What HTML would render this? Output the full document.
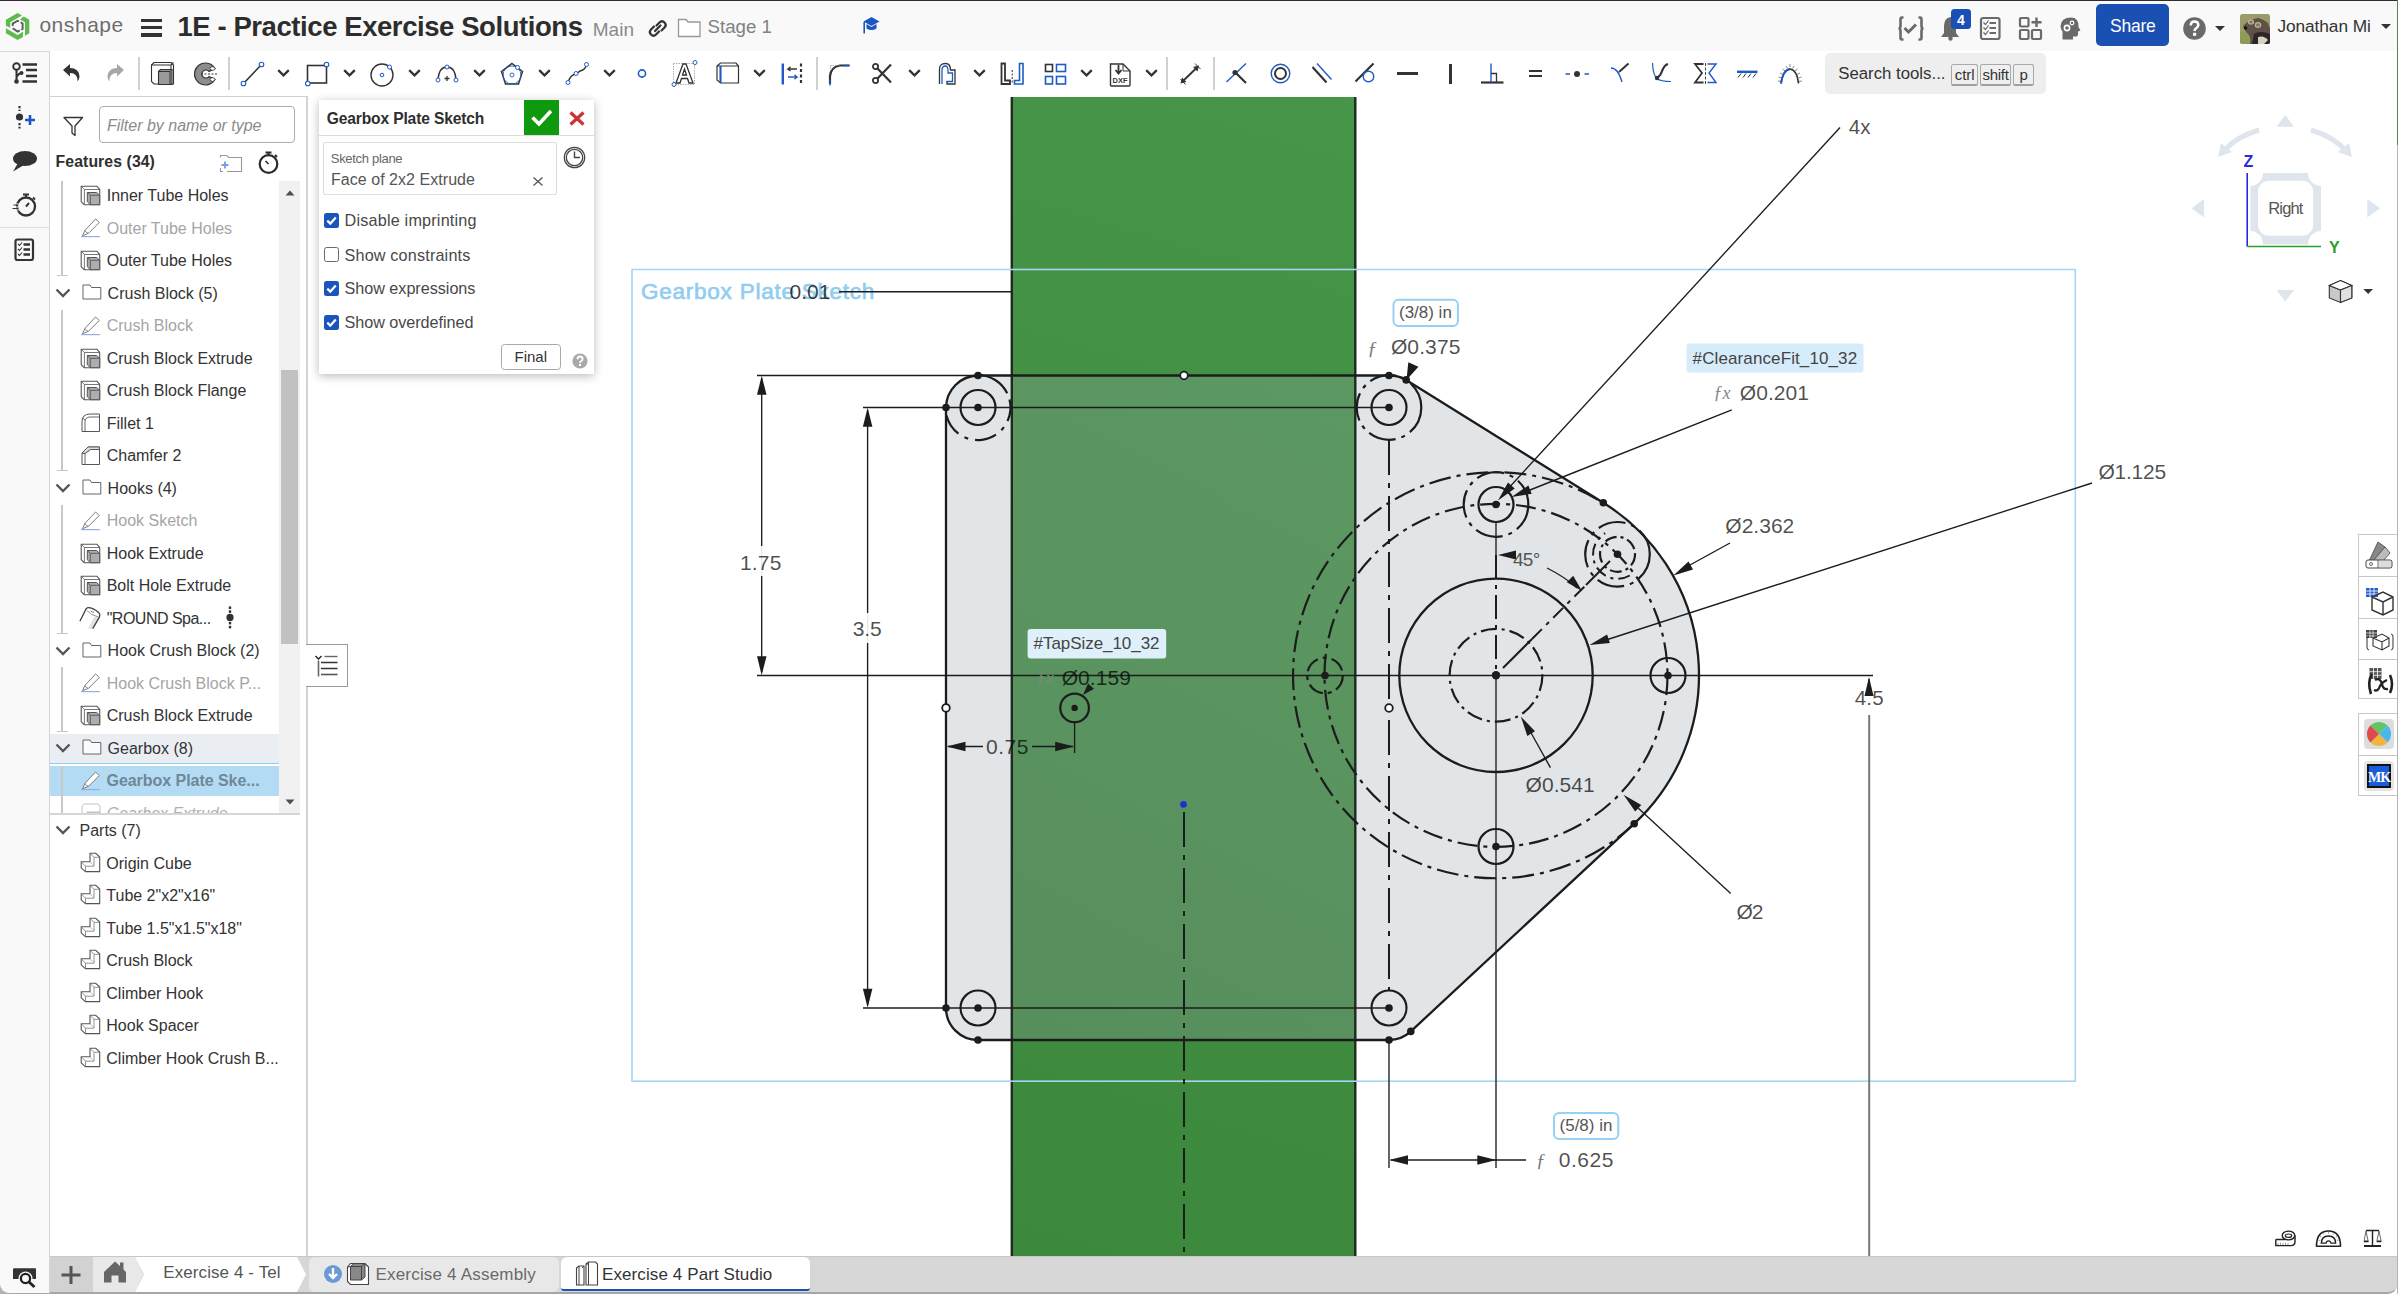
<!DOCTYPE html>
<html><head><meta charset="utf-8">
<style>
*{box-sizing:border-box;margin:0;padding:0}
html,body{width:2398px;height:1294px;overflow:hidden;background:#fff;font-family:"Liberation Sans",sans-serif;color:#333}
.a{position:absolute}
.t{position:absolute;white-space:nowrap;line-height:1}
svg{position:absolute;overflow:visible}
</style></head><body>
<svg style="left:0;top:0" width="2398" height="1294" viewBox="0 0 2398 1294">
<defs><clipPath id="vp"><rect x="308" y="97" width="2089" height="1159"/></clipPath><clipPath id="gr"><rect x="1011" y="97" width="345" height="1158"/></clipPath><linearGradient id="gg" gradientUnits="userSpaceOnUse" x1="1011" y1="1255" x2="1356" y2="97"><stop offset="0" stop-color="#3c883d"/><stop offset="1" stop-color="#479548"/></linearGradient><linearGradient id="gl" gradientUnits="userSpaceOnUse" x1="1011" y1="1040" x2="1356" y2="375"><stop offset="0" stop-color="#578f5c"/><stop offset="1" stop-color="#5c9862"/></linearGradient></defs>
<g clip-path="url(#vp)">
<text stroke="#92cdf0" stroke-width="0.7" x="641.0" y="299.4" font-family="Liberation Sans" font-size="22.5" font-weight="normal" font-style="normal" letter-spacing="0.76" fill="#92cdf0" fill-opacity="1">Gearbox Plate Sketch</text>
<rect x="1011" y="97" width="345" height="1159" fill="url(#gg)"/>
<path d="M978 375.5 L1389 375.5 A32.5 32.5 0 0 1 1406.2 379.9 L1603.3 502.7 A203 203 0 0 1 1634.2 823.7 L1410.8 1031.4 A32 32 0 0 1 1389 1040 L978 1040 A32 32 0 0 1 946 1008 L946 407.5 A32.5 32.5 0 0 1 978 375.5 Z" fill="#e1e5e8"/>
<path d="M978 375.5 L1389 375.5 A32.5 32.5 0 0 1 1406.2 379.9 L1603.3 502.7 A203 203 0 0 1 1634.2 823.7 L1410.8 1031.4 A32 32 0 0 1 1389 1040 L978 1040 A32 32 0 0 1 946 1008 L946 407.5 A32.5 32.5 0 0 1 978 375.5 Z" fill="url(#gl)" clip-path="url(#gr)"/>
<path d="M1011.8 97.0 L1011.8 1256.0" stroke="#1e2a1e" stroke-width="2.4" fill="none"/>
<path d="M1355.3 97.0 L1355.3 1256.0" stroke="#1e2a1e" stroke-width="2.4" fill="none"/>
<rect x="632" y="269.5" width="1443.3" height="811.7" fill="none" stroke="#a6d6f4" stroke-width="1.6"/>
<path d="M757.0 375.5 L980.0 375.5" stroke="#1c1c1c" stroke-width="1.35" fill="none"/>
<path d="M863.0 407.5 L1389.0 407.5" stroke="#1c1c1c" stroke-width="1.35" fill="none"/>
<path d="M757.0 675.5 L1873.0 675.5" stroke="#1c1c1c" stroke-width="1.35" fill="none"/>
<path d="M863.0 1008.0 L1389.0 1008.0" stroke="#1c1c1c" stroke-width="1.35" fill="none"/>
<path d="M839.0 291.7 L1012.0 291.7" stroke="#1c1c1c" stroke-width="1.35" fill="none"/>
<path d="M761.7 378.0 L761.7 672.0" stroke="#1c1c1c" stroke-width="1.35" fill="none"/>
<path d="M761.7 375.8 L766.5 394.8 L757.0 394.8 Z" fill="#1c1c1c"/>
<path d="M761.7 675.2 L757.0 656.2 L766.5 656.2 Z" fill="#1c1c1c"/>
<rect x="736" y="546" width="50" height="30" fill="#fff" opacity="0.9"/>
<text x="740.0" y="569.5" font-family="Liberation Sans" font-size="21" font-weight="normal" font-style="normal" letter-spacing="0.18" fill="#000" fill-opacity="0.7">1.75</text>
<path d="M867.6 410.0 L867.6 1005.0" stroke="#1c1c1c" stroke-width="1.35" fill="none"/>
<path d="M867.6 407.8 L872.4 426.8 L862.9 426.8 Z" fill="#1c1c1c"/>
<path d="M867.6 1007.7 L862.9 988.7 L872.4 988.7 Z" fill="#1c1c1c"/>
<rect x="848" y="613" width="38" height="30" fill="#fff" opacity="0.9"/>
<text x="852.7" y="635.6" font-family="Liberation Sans" font-size="21" font-weight="normal" font-style="normal" letter-spacing="-0.06" fill="#000" fill-opacity="0.7">3.5</text>
<path d="M948.0 746.5 L983.0 746.5" stroke="#1c1c1c" stroke-width="1.35" fill="none"/>
<path d="M1032.0 746.5 L1073.0 746.5" stroke="#1c1c1c" stroke-width="1.35" fill="none"/>
<path d="M946.5 746.5 L965.5 741.8 L965.5 751.2 Z" fill="#1c1c1c"/>
<path d="M1074.2 746.5 L1055.2 751.2 L1055.2 741.8 Z" fill="#1c1c1c"/>
<path d="M1074.6 722.0 L1074.6 753.0" stroke="#1c1c1c" stroke-width="1.35" fill="none"/>
<text x="986.0" y="754.0" font-family="Liberation Sans" font-size="21" font-weight="normal" font-style="normal" letter-spacing="0.48" fill="#000" fill-opacity="0.7">0.75</text>
<text x="789.5" y="299.4" font-family="Liberation Sans" font-size="21" font-weight="normal" font-style="normal" letter-spacing="0.03" fill="#000" fill-opacity="0.75">0.01</text>
<path d="M978 375.5 L1389 375.5 A32.5 32.5 0 0 1 1406.2 379.9 L1603.3 502.7 A203 203 0 0 1 1634.2 823.7 L1410.8 1031.4 A32 32 0 0 1 1389 1040 L978 1040 A32 32 0 0 1 946 1008 L946 407.5 A32.5 32.5 0 0 1 978 375.5 Z" fill="none" stroke="#1c1c1c" stroke-width="2.3"/>
<path d="M1634.4 823.8 A203 203 0 1 1 1603.6 503.1" stroke="#1c1c1c" stroke-width="2.2" stroke-dasharray="22 6 4 6" fill="none"/>
<circle cx="1496.0" cy="675.3" r="171.5" stroke="#1c1c1c" stroke-width="2.2" stroke-dasharray="20 6 4 6" stroke-dashoffset="0" fill="none"/>
<circle cx="1496.0" cy="675.3" r="96.7" stroke="#1c1c1c" stroke-width="2.3" fill="none"/>
<circle cx="1496.0" cy="675.3" r="46.4" stroke="#1c1c1c" stroke-width="2.2" stroke-dasharray="16 5 3 5" stroke-dashoffset="0" fill="none"/>
<path d="M1389.0 440.0 L1389.0 990.0" stroke="#1c1c1c" stroke-width="2.0" stroke-dasharray="35 8 5 8" fill="none"/>
<path d="M1184.0 812.0 L1184.0 1256.0" stroke="#1c1c1c" stroke-width="2.0" stroke-dasharray="35 8 5 8" fill="none"/>
<path d="M1496.0 522.0 L1496.0 555.0" stroke="#1c1c1c" stroke-width="1.35" fill="none"/>
<path d="M1496.0 555.0 L1496.0 675.0" stroke="#1c1c1c" stroke-width="2.0" stroke-dasharray="24 6 4 6" fill="none"/>
<path d="M1496.0 675.0 L1496.0 1168.0" stroke="#1c1c1c" stroke-width="1.35" fill="none"/>
<path d="M1389.0 1040.0 L1389.0 1168.0" stroke="#1c1c1c" stroke-width="1.35" fill="none"/>
<path d="M1503.0 668.0 L1532.0 639.0" stroke="#1c1c1c" stroke-width="2.0" fill="none"/>
<path d="M1532.0 639.0 L1586.0 585.0" stroke="#1c1c1c" stroke-width="2.0" stroke-dasharray="14 6 4 6" fill="none"/>
<path d="M1586.0 585.0 L1610.0 561.0" stroke="#1c1c1c" stroke-width="2.0" fill="none"/>
<circle cx="978.0" cy="407.5" r="17.5" stroke="#1c1c1c" stroke-width="2.2" fill="none"/>
<circle cx="978.0" cy="407.5" r="3.8" fill="#1c1c1c"/>
<circle cx="1389.0" cy="407.5" r="17.5" stroke="#1c1c1c" stroke-width="2.2" fill="none"/>
<circle cx="1389.0" cy="407.5" r="3.8" fill="#1c1c1c"/>
<circle cx="978.0" cy="1008.0" r="17.5" stroke="#1c1c1c" stroke-width="2.2" fill="none"/>
<circle cx="978.0" cy="1008.0" r="3.8" fill="#1c1c1c"/>
<circle cx="1389.0" cy="1008.0" r="17.5" stroke="#1c1c1c" stroke-width="2.2" fill="none"/>
<circle cx="1389.0" cy="1008.0" r="3.8" fill="#1c1c1c"/>
<circle cx="1496.0" cy="504.5" r="17.5" stroke="#1c1c1c" stroke-width="2.2" fill="none"/>
<circle cx="1496.0" cy="504.5" r="3.8" fill="#1c1c1c"/>
<circle cx="1668.0" cy="675.5" r="17.5" stroke="#1c1c1c" stroke-width="2.2" fill="none"/>
<circle cx="1668.0" cy="675.5" r="3.8" fill="#1c1c1c"/>
<circle cx="1496.0" cy="846.5" r="17.5" stroke="#1c1c1c" stroke-width="2.2" fill="none"/>
<circle cx="1496.0" cy="846.5" r="3.8" fill="#1c1c1c"/>
<circle cx="1325.0" cy="675.5" r="17.8" stroke="#1c1c1c" stroke-width="2.2" stroke-dasharray="16 5 4 5" stroke-dashoffset="0" fill="none"/>
<circle cx="1325.0" cy="675.5" r="3.8" fill="#1c1c1c"/>
<circle cx="1617.5" cy="554.3" r="17.5" stroke="#1c1c1c" stroke-width="2.2" stroke-dasharray="12 4 3 4" stroke-dashoffset="0" fill="none"/>
<circle cx="1617.5" cy="554.3" r="3.8" fill="#1c1c1c"/>
<circle cx="1389.0" cy="407.5" r="32.3" stroke="#1c1c1c" stroke-width="2.2" stroke-dasharray="28 6 4 6" stroke-dashoffset="0" fill="none"/>
<circle cx="1496.0" cy="504.5" r="32.3" stroke="#1c1c1c" stroke-width="2.2" stroke-dasharray="28 6 4 6" stroke-dashoffset="0" fill="none"/>
<circle cx="1617.5" cy="554.3" r="32.3" stroke="#1c1c1c" stroke-width="2.2" stroke-dasharray="28 6 4 6" stroke-dashoffset="0" fill="none"/>
<path d="M978.0 375.0 A32.5 32.5 0 0 1 1007.2 393.3" stroke="#1c1c1c" stroke-width="2.2" fill="none"/>
<path d="M1009.5 399.6 A32.5 32.5 0 1 1 945.5 407.5" stroke="#1c1c1c" stroke-width="2.2" stroke-dasharray="22 7 4 7" fill="none"/>
<path d="M1629.8 575.5 A24.5 24.5 0 0 1 1605.2 533.1" stroke="#1c1c1c" stroke-width="2.0" stroke-dasharray="12 5 3 5" fill="none"/>
<circle cx="1496.0" cy="675.3" r="4.2" fill="#1c1c1c"/>
<circle cx="1074.6" cy="707.9" r="14.3" stroke="#1c1c1c" stroke-width="2.2" fill="none"/>
<circle cx="1074.6" cy="707.9" r="3.2" fill="#1c1c1c"/>
<circle cx="978.0" cy="375.5" r="3.8" fill="#1c1c1c"/>
<circle cx="946.0" cy="407.5" r="3.8" fill="#1c1c1c"/>
<circle cx="1389.0" cy="375.5" r="3.8" fill="#1c1c1c"/>
<circle cx="1406.2" cy="379.9" r="3.8" fill="#1c1c1c"/>
<circle cx="1603.3" cy="502.7" r="3.8" fill="#1c1c1c"/>
<circle cx="1634.2" cy="823.7" r="3.8" fill="#1c1c1c"/>
<circle cx="1410.8" cy="1031.4" r="3.8" fill="#1c1c1c"/>
<circle cx="1389.0" cy="1040.0" r="3.8" fill="#1c1c1c"/>
<circle cx="978.0" cy="1040.0" r="3.8" fill="#1c1c1c"/>
<circle cx="946.0" cy="1008.0" r="3.8" fill="#1c1c1c"/>
<circle cx="1184.0" cy="375.5" r="3.8" fill="#fff" stroke="#1c1c1c" stroke-width="1.8"/>
<circle cx="946.0" cy="707.9" r="3.8" fill="#fff" stroke="#1c1c1c" stroke-width="1.8"/>
<circle cx="1389.0" cy="708.0" r="3.8" fill="#fff" stroke="#1c1c1c" stroke-width="1.8"/>
<circle cx="1183.5" cy="804.4" r="3.3" fill="#1a30d0"/>
<path d="M1840.0 127.5 L1505.0 492.0" stroke="#1c1c1c" stroke-width="1.35" fill="none"/>
<path d="M1498.0 500.5 L1508.0 482.6 L1514.7 488.6 Z" fill="#1c1c1c"/>
<path d="M1731.8 409.9 L1530.0 490.0" stroke="#1c1c1c" stroke-width="1.35" fill="none"/>
<path d="M1511.5 497.0 L1528.4 485.4 L1531.7 493.8 Z" fill="#1c1c1c"/>
<path d="M1730.0 543.0 L1690.0 565.0" stroke="#1c1c1c" stroke-width="1.35" fill="none"/>
<path d="M1673.4 575.5 L1688.5 561.6 L1693.0 569.4 Z" fill="#1c1c1c"/>
<path d="M2092.0 483.0 L1606.0 640.0" stroke="#1c1c1c" stroke-width="1.35" fill="none"/>
<path d="M1589.5 645.0 L1607.1 634.5 L1609.9 643.1 Z" fill="#1c1c1c"/>
<path d="M1550.4 767.6 L1530.0 731.0" stroke="#1c1c1c" stroke-width="1.35" fill="none"/>
<path d="M1520.8 716.5 L1535.0 731.3 L1527.3 735.9 Z" fill="#1c1c1c"/>
<path d="M1730.7 893.4 L1637.0 807.0" stroke="#1c1c1c" stroke-width="1.35" fill="none"/>
<path d="M1623.5 794.8 L1641.3 805.0 L1635.2 811.6 Z" fill="#1c1c1c"/>
<path d="M1406.5 380.0 L1408.3 362.2 L1418.4 366.7 Z" fill="#1c1c1c"/>
<path d="M1083.0 695.0 L1088.1 683.4 L1094.0 688.8 Z" fill="#1c1c1c"/>
<path d="M1498.0 555.0 L1516.0 550.5 L1516.0 559.5 Z" fill="#1c1c1c"/>
<path d="M1547 568 Q1565 577 1577 588" fill="none" stroke="#1c1c1c" stroke-width="1.3"/>
<path d="M1582.0 591.0 L1566.8 582.2 L1573.2 575.8 Z" fill="#1c1c1c"/>
<path d="M1869.0 679.0 L1869.0 696.0" stroke="#1c1c1c" stroke-width="1.35" fill="none"/>
<path d="M1869.0 677.0 L1873.5 696.0 L1864.5 696.0 Z" fill="#1c1c1c"/>
<path d="M1869.2 715.0 L1869.2 1256.0" stroke="#777" stroke-width="2" fill="none"/>
<path d="M1391.0 1160.0 L1526.0 1160.0" stroke="#1c1c1c" stroke-width="1.35" fill="none"/>
<path d="M1389.0 1160.0 L1408.0 1155.2 L1408.0 1164.8 Z" fill="#1c1c1c"/>
<path d="M1496.3 1160.0 L1477.3 1164.8 L1477.3 1155.2 Z" fill="#1c1c1c"/>
<text x="1390.9" y="354.3" font-family="Liberation Sans" font-size="21" font-weight="normal" font-style="normal" letter-spacing="0.12" fill="#000" fill-opacity="0.7">Ø0.375</text>
<text x="1367.4" y="355.0" font-family="Liberation Serif" font-size="19" font-weight="normal" font-style="italic" letter-spacing="0.00" fill="#777" fill-opacity="1">ƒ</text>
<text x="1739.8" y="400.0" font-family="Liberation Sans" font-size="21" font-weight="normal" font-style="normal" letter-spacing="0.04" fill="#000" fill-opacity="0.7">Ø0.201</text>
<text x="1713.5" y="399.0" font-family="Liberation Serif" font-size="18" font-weight="normal" font-style="italic" letter-spacing="0.00" fill="#888" fill-opacity="1">ƒx</text>
<text x="1848.8" y="134.3" font-family="Liberation Sans" font-size="20.5" font-weight="normal" font-style="normal" letter-spacing="0.07" fill="#000" fill-opacity="0.7">4x</text>
<text x="2098.4" y="479.4" font-family="Liberation Sans" font-size="21" font-weight="normal" font-style="normal" letter-spacing="-0.21" fill="#000" fill-opacity="0.7">Ø1.125</text>
<text x="1725.3" y="533.2" font-family="Liberation Sans" font-size="21" font-weight="normal" font-style="normal" letter-spacing="0.02" fill="#000" fill-opacity="0.7">Ø2.362</text>
<text x="1525.6" y="792.0" font-family="Liberation Sans" font-size="21" font-weight="normal" font-style="normal" letter-spacing="0.02" fill="#000" fill-opacity="0.7">Ø0.541</text>
<text x="1736.5" y="918.9" font-family="Liberation Sans" font-size="21" font-weight="normal" font-style="normal" letter-spacing="-1.11" fill="#000" fill-opacity="0.7">Ø2</text>
<text x="1854.8" y="704.6" font-family="Liberation Sans" font-size="20.5" font-weight="normal" font-style="normal" letter-spacing="0.13" fill="#000" fill-opacity="0.7">4.5</text>
<text x="1558.8" y="1167.0" font-family="Liberation Sans" font-size="21" font-weight="normal" font-style="normal" letter-spacing="0.49" fill="#000" fill-opacity="0.7">0.625</text>
<text x="1536.0" y="1167.0" font-family="Liberation Serif" font-size="19" font-weight="normal" font-style="italic" letter-spacing="0.00" fill="#777" fill-opacity="1">ƒ</text>
<text x="1513.0" y="566.0" font-family="Liberation Sans" font-size="19" font-weight="normal" font-style="normal" letter-spacing="-0.74" fill="#555" fill-opacity="1">45°</text>
<text x="1061.7" y="685.4" font-family="Liberation Sans" font-size="21" font-weight="normal" font-style="normal" letter-spacing="0.05" fill="#000" fill-opacity="0.72">Ø0.159</text>
<text x="1036.8" y="684.0" font-family="Liberation Serif" font-size="18" font-weight="normal" font-style="italic" letter-spacing="0.00" fill="#7a8a7a" fill-opacity="1">ƒx</text>
<rect x="1393.5" y="299.7" width="64.4" height="26.4" rx="5" fill="#fff" stroke="#97d0f2" stroke-width="2"/>
<text x="1399.0" y="318.1" font-family="Liberation Sans" font-size="17" font-weight="normal" font-style="normal" letter-spacing="-0.01" fill="#555" fill-opacity="1">(3/8) in</text>
<rect x="1554" y="1113" width="64.3" height="26" rx="5" fill="#fff" stroke="#97d0f2" stroke-width="2"/>
<text x="1559.5" y="1131.3" font-family="Liberation Sans" font-size="17" font-weight="normal" font-style="normal" letter-spacing="0.01" fill="#555" fill-opacity="1">(5/8) in</text>
<rect x="1686.5" y="343.5" width="177" height="29.1" rx="3" fill="#d7ecfa"/>
<text x="1692.6" y="364.2" font-family="Liberation Sans" font-size="17" font-weight="normal" font-style="normal" letter-spacing="0.11" fill="#444" fill-opacity="1">#ClearanceFit_10_32</text>
<rect x="1027.6" y="629.1" width="138.6" height="29.4" rx="3" fill="#dff0fb"/>
<text x="1033.6" y="649.2" font-family="Liberation Sans" font-size="17" font-weight="normal" font-style="normal" letter-spacing="-0.06" fill="#444" fill-opacity="1">#TapSize_10_32</text>
</g></svg>
<svg style="left:2180px;top:105px" width="210" height="205" viewBox="2180 105 210 205">
<path d="M2276.5 126.7 L2285.2 115 L2294 126.7 Z" fill="#dfe5ec"/>
<path d="M2276.5 290 L2285.2 301.5 L2294 290 Z" fill="#dfe5ec"/>
<path d="M2204 199 L2191.5 208.2 L2204 217.5 Z" fill="#dfe5ec"/>
<path d="M2367.3 199 L2380 208.2 L2367.3 217.5 Z" fill="#dfe5ec"/>
<path d="M2259 130 Q2236 137 2225 150" fill="none" stroke="#dfe5ec" stroke-width="5"/><path d="M2218 157 L2221 143 L2232 152 Z" fill="#dfe5ec"/>
<path d="M2311 130 Q2334 137 2345 150" fill="none" stroke="#dfe5ec" stroke-width="5"/><path d="M2352 157 L2349 143 L2338 152 Z" fill="#dfe5ec"/>
<path d="M2263 173 H2308 A13 13 0 0 0 2321 186 V231 A13 13 0 0 0 2308 244.5 H2263 A13 13 0 0 0 2250.4 231 V186 A13 13 0 0 0 2263 173 Z" fill="#dfe5ec"/>
<rect x="2258" y="180.8" width="55.2" height="55" rx="11" fill="#fff"/>
<text x="2268.2" y="213.6" font-family="Liberation Sans" font-size="16.5" font-weight="normal" font-style="normal" letter-spacing="-0.82" fill="#555" fill-opacity="1">Right</text>
<path d="M2247.2 173 V246.5" stroke="#2a2ae0" stroke-width="1.6"/>
<path d="M2247.2 246.5 H2321" stroke="#2aa02a" stroke-width="1.6"/>
<text x="2243.5" y="167.3" font-family="Liberation Sans" font-size="16" font-weight="bold" font-style="normal" letter-spacing="-2.27" fill="#2a2ae0" fill-opacity="1">Z</text>
<text x="2329.0" y="253.2" font-family="Liberation Sans" font-size="16" font-weight="bold" font-style="normal" letter-spacing="-2.17" fill="#2aa02a" fill-opacity="1">Y</text>
<path d="M2340.5 280.5 L2351.8 285.5 V298 L2340.5 302.5 L2329.3 298 V285.5 Z" fill="#c9c9c9" stroke="#333" stroke-width="1.1"/><path d="M2329.3 285.5 L2340.5 290 L2351.8 285.5 M2340.5 290 V302.5" fill="none" stroke="#333" stroke-width="1.1"/><path d="M2329.3 285.5 L2340.5 280.5 L2351.8 285.5 L2340.5 290 Z" fill="#fff" stroke="#333" stroke-width="1.1"/><path d="M2340.5 290 L2351.8 285.5 V298 L2340.5 302.5 Z" fill="#e0e0e0" stroke="#333" stroke-width="1.1"/>
<path d="M2363.4 289 H2373 L2368.2 294 Z" fill="#333"/>
</svg>
<div class="a" style="left:2358px;top:534px;width:40px;height:165px;border:1px solid #c8c8c8;border-right:none;background:#fff"></div>
<div class="a" style="left:2358px;top:575.6px;width:40px;height:1px;background:#c8c8c8"></div>
<div class="a" style="left:2358px;top:617.8px;width:40px;height:1px;background:#c8c8c8"></div>
<div class="a" style="left:2358px;top:658.5px;width:40px;height:1px;background:#c8c8c8"></div>
<div class="a" style="left:2358px;top:713px;width:40px;height:83.4px;border:1px solid #c8c8c8;border-right:none;background:#fff"></div>
<div class="a" style="left:2358px;top:754.5px;width:40px;height:1px;background:#c8c8c8"></div>
<svg style="left:2358px;top:534px" width="40" height="265" viewBox="0 0 40 265"><path d="M11 27 L20 8 L27 13 L21 27 Z" fill="#888" stroke="#444" stroke-width="0.8"/><path d="M15 27 L27 13 L32 19 L25 27 Z" fill="#bbb" stroke="#444" stroke-width="0.8"/><rect x="8" y="26" width="26" height="8" rx="2" fill="#fff" stroke="#444" stroke-width="1"/><circle cx="13" cy="30" r="1.5" fill="none" stroke="#444" stroke-width="0.8"/><path d="M20 26 V34" stroke="#444" stroke-width="0.8"/><rect x="21" y="27" width="12" height="6" fill="#ddd"/><rect x="8" y="54" width="12" height="9" fill="#2a5ecf"/><path d="M8 57 H20 M8 60 H20 M12 54 V63 M16 54 V63" stroke="#fff" stroke-width="0.8"/><path d="M14 63 L25 58 L35 63 V76 L25 81 L14 76 Z M14 63 L25 68 L35 63 M25 68 V81" fill="none" stroke="#333" stroke-width="1.4"/><rect x="8" y="96" width="11" height="8" fill="#444"/><path d="M8 99 H19 M8 102 H19 M12 96 V104 M15 96 V104" stroke="#fff" stroke-width="0.7"/><path d="M15 104 L24 100 L31 104 V112 L24 116 L15 112 Z M15 104 L24 108 L31 104 M24 108 V116" fill="none" stroke="#333" stroke-width="1.1"/><path d="M11 102 Q9 102 9 105 V113 Q9 116 11 116 M33 100 Q35 100 35 103 V113 Q35 116 33 116" fill="none" stroke="#333" stroke-width="1"/><rect x="11.5" y="134" width="12" height="11" fill="#555"/><path d="M11.5 137.7 H23.5 M11.5 141.3 H23.5 M15.5 134 V145 M19.5 134 V145" stroke="#fff" stroke-width="0.8"/><path d="M14 140 Q9 148 13 160" fill="none" stroke="#222" stroke-width="2.6"/><path d="M32 141 Q36 150 32 159" fill="none" stroke="#222" stroke-width="2.6"/><path d="M17 146 Q22 143 24 150 Q25 156 30 155 M29 146 Q24 148 22 152 Q20 158 16 156" fill="none" stroke="#222" stroke-width="2.3"/><rect x="6" y="185" width="30" height="30" rx="4" fill="#ddd"/><path d="M21 200 L12.5 191.5 A12 12 0 0 1 29.5 191.5 Z" fill="#62c462"/><path d="M21 200 L29.5 191.5 A12 12 0 0 1 29.5 208.5 Z" fill="#4cb8ea"/><path d="M21 200 L29.5 208.5 A12 12 0 0 1 12.5 208.5 Z" fill="#f0b440"/><path d="M21 200 L12.5 208.5 A12 12 0 0 1 12.5 191.5 Z" fill="#df4a4a"/><rect x="6" y="227" width="30" height="30" rx="4" fill="#e4e4e4"/><rect x="9" y="230" width="24" height="24" fill="#111"/><rect x="11" y="232" width="20" height="20" fill="#1a5bd8"/><text x="21" y="248" font-family="Liberation Serif" font-weight="bold" font-size="14" fill="#fff" text-anchor="middle" letter-spacing="-1">MK</text></svg>
<svg style="left:2270px;top:1225px" width="120" height="26" viewBox="2270 1225 120 26"><path d="M2275.8 1239.5 H2285 M2275.8 1239.5 V1245.6 H2291 Q2295 1245.6 2295 1241.5 V1235.5" fill="none" stroke="#222" stroke-width="1.4"/><ellipse cx="2288.5" cy="1235.5" rx="6.3" ry="4.4" fill="#fff" stroke="#222" stroke-width="1.4"/><ellipse cx="2288.5" cy="1235.7" rx="3.2" ry="1.7" fill="none" stroke="#222" stroke-width="1.2"/><path d="M2278 1245 V1243 M2280.5 1245 V1242.5 M2283 1245 V1243 M2285.5 1245 V1242.5 M2288 1245 V1243" stroke="#777" stroke-width="0.7"/><path d="M2316.5 1246.3 Q2316.5 1231 2328.5 1231 Q2340.5 1231 2340.5 1246.3 Z" fill="none" stroke="#222" stroke-width="1.6" stroke-linejoin="round"/><path d="M2321.3 1243.2 Q2321.5 1236 2328.5 1236 Q2335.5 1236 2335.7 1243.2 H2331 Q2330.5 1240.8 2328.5 1240.8 Q2326.5 1240.8 2326 1243.2 Z" fill="none" stroke="#222" stroke-width="1.3"/><path d="M2318.5 1240 L2320 1240.5 M2320 1236 L2321.3 1237 M2323 1233.3 L2324 1234.5 M2328.5 1232.2 V1233.6 M2334 1233.3 L2333 1234.5 M2337 1236 L2335.7 1237 M2338.5 1240 L2337 1240.5" stroke="#666" stroke-width="0.7"/><path d="M2366 1230.5 H2379 M2372.5 1230.5 V1245.5" stroke="#222" stroke-width="1.4"/><path d="M2364 1246 H2381" stroke="#222" stroke-width="2"/><path d="M2366 1231 L2364.2 1240.5 M2366 1231 L2368 1240.5 M2379 1231 L2377 1240.5 M2379 1231 L2381 1240.5" stroke="#444" stroke-width="0.8"/><path d="M2363.8 1241.3 H2368.6 M2376.6 1241.3 H2381.4" stroke="#222" stroke-width="1.8"/></svg>
<div class="a" style="left:0;top:0;width:2398px;height:51px;background:#f9f9f9;border-top:1px solid #2e2e2e"></div>
<svg style="left:0px;top:0px" width="40" height="50" viewBox="0 0 40 50">
<path d="M5.9 25.8 L5.9 19.75 L17.6 13 L22 15.5 L17.6 18 L10.24 22.25 L10.24 27.8 Z" fill="#5dba4c"/>
<path d="M19.9 19.6 L23.7 16.6 L29.3 19.75 L29.3 33.25 L25 35.7 L25 22.3 Z" fill="#5dba4c"/>
<path d="M5.9 28.2 L5.9 33.25 L17.6 40 L23 36.9 L23 31.8 L17.6 34.9 Z" fill="#5dba4c"/>
<path d="M12.7 26 V23.6 L17.6 20.8 L18.9 21.5 M20.6 22.3 L22.6 23.5 V29 L21.2 29.8 M12.7 28.3 L17.6 31.6 L19.7 30.4" fill="none" stroke="#5a5a5a" stroke-width="1.9"/>
</svg>
<div class="t" style="left:39.4px;top:13.5px;font-size:21px;color:#6e6e6e;font-weight:normal;font-style:normal;letter-spacing:0.55px;">onshape</div>
<div class="a" style="left:141px;top:18.6px;width:20.5px;height:3.6px;background:#333"></div>
<div class="a" style="left:141px;top:25.8px;width:20.5px;height:3.6px;background:#333"></div>
<div class="a" style="left:141px;top:33.4px;width:20.5px;height:3.6px;background:#333"></div>
<div class="t" style="left:177.5px;top:13.0px;font-size:27.5px;color:#2d2d2d;font-weight:bold;font-style:normal;letter-spacing:-0.43px;">1E - Practice Exercise Solutions</div>
<div class="t" style="left:592.7px;top:19.9px;font-size:19px;color:#8a8a8a;font-weight:normal;font-style:normal;letter-spacing:0.03px;">Main</div>
<svg style="left:648px;top:19px" width="20" height="19" viewBox="0 0 20 19">
<path d="M8.5 6.5 L11.5 3.5 Q14 1 16.5 3.5 Q19 6 16.5 8.5 L13.5 11.5" fill="none" stroke="#333" stroke-width="2.2" stroke-linecap="round"/>
<path d="M11 12.5 L8 15.5 Q5.5 18 3 15.5 Q0.5 13 3 10.5 L6 7.5" fill="none" stroke="#333" stroke-width="2.2" stroke-linecap="round"/>
<path d="M7 12 L12.5 6.5" stroke="#333" stroke-width="2.2" stroke-linecap="round"/></svg>
<svg style="left:677px;top:18px" width="25" height="20" viewBox="0 0 25 20">
<path d="M1.5 1.5 H9 L11 4 H23 V18.5 H1.5 Z" fill="#fff" stroke="#999" stroke-width="1.3"/></svg>
<div class="t" style="left:707.6px;top:17.9px;font-size:18.7px;color:#818181;font-weight:normal;font-style:normal;letter-spacing:-0.01px;">Stage 1</div>
<svg style="left:863px;top:16px" width="17" height="20" viewBox="0 0 17 20">
<path d="M8.5 1 L16.5 5.5 L8.5 10 L0.5 5.5 Z" fill="#1a55c0"/>
<path d="M3.5 8 V12.5 Q8.5 15.5 13.5 12.5 V8 L8.5 11 Z" fill="#1a55c0"/>
<path d="M1.2 6 V17.5" stroke="#1a55c0" stroke-width="1.6"/></svg>
<svg style="left:1897px;top:16px" width="28" height="25" viewBox="0 0 28 25">
<path d="M6.5 1.5 H5 Q3.5 1.5 3.5 3.5 V10 Q3.5 12.5 1.5 12.5 Q3.5 12.5 3.5 15 V21.5 Q3.5 23.5 5 23.5 H6.5" fill="none" stroke="#6a6a6a" stroke-width="2.6"/>
<path d="M21.5 1.5 H23 Q24.5 1.5 24.5 3.5 V10 Q24.5 12.5 26.5 12.5 Q24.5 12.5 24.5 15 V21.5 Q24.5 23.5 23 23.5 H21.5" fill="none" stroke="#6a6a6a" stroke-width="2.6"/>
<path d="M7.5 12 L11.5 16 L19 8.5" fill="none" stroke="#6a6a6a" stroke-width="3"/></svg>
<svg style="left:1939px;top:8px" width="34" height="33" viewBox="0 0 34 33">
<path d="M11.5 9 Q5 10 5 18 V25 L2 29 H20 L17 25 V18 Q17 10 11.5 9 Z" fill="#6a6a6a"/>
<circle cx="11.5" cy="30.5" r="2.2" fill="#6a6a6a"/>
<rect x="12" y="1" width="20" height="20" rx="3.5" fill="#1a4fb5"/>
<text x="22" y="16.5" font-family="Liberation Sans" font-weight="bold" font-size="14" fill="#fff" text-anchor="middle">4</text></svg>
<svg style="left:1979px;top:16px" width="23" height="25" viewBox="0 0 23 25">
<rect x="2" y="2" width="18.5" height="21" rx="2" fill="none" stroke="#6a6a6a" stroke-width="2.2"/>
<path d="M4.5 6.5 L6.5 8.5 L9.5 4.5 M4.5 11.5 L6.5 13.5 L9.5 9.5 M4.5 16.5 L6.5 18.5 L9.5 14.5" fill="none" stroke="#6a6a6a" stroke-width="1.2"/>
<path d="M10.5 7 H17 M10.5 12 H17 M10.5 17 H17" stroke="#6a6a6a" stroke-width="2.2"/></svg>
<svg style="left:2018px;top:16px" width="25" height="25" viewBox="0 0 25 25">
<rect x="2" y="2" width="8.5" height="8.5" rx="1" fill="none" stroke="#6a6a6a" stroke-width="2.2"/>
<rect x="2" y="14" width="8.5" height="9" rx="1" fill="none" stroke="#6a6a6a" stroke-width="2.2"/>
<rect x="14" y="14" width="9" height="9" rx="1" fill="none" stroke="#6a6a6a" stroke-width="2.2"/>
<path d="M18.5 1.5 V11 M13.5 6.2 H23.5" stroke="#6a6a6a" stroke-width="2.4"/></svg>
<svg style="left:2059px;top:16px" width="24" height="25" viewBox="0 0 24 25">
<path d="M12 1.5 Q2 1.5 1.5 10 Q1.5 13 3.5 15.5 L3.5 23.5 H14 V20.5 H17 Q19 20.5 19 18.5 V15.5 L21.5 14.5 L19.5 11 Q20 1.5 12 1.5 Z" fill="#6a6a6a"/>
<circle cx="8" cy="12" r="2.6" fill="none" stroke="#fff" stroke-width="1.6"/><circle cx="13" cy="7" r="1.8" fill="none" stroke="#fff" stroke-width="1.2"/></svg>
<div class="a" style="left:2096px;top:4px;width:73px;height:42px;background:#1a50b1;border-radius:5px"></div>
<div class="t" style="left:2110.0px;top:17.8px;font-size:17.5px;color:#fff;font-weight:normal;font-style:normal;letter-spacing:-0.24px;">Share</div>
<svg style="left:2182px;top:16px" width="25" height="25" viewBox="0 0 25 25">
<circle cx="12.5" cy="12.5" r="11.3" fill="#6a6a6a"/>
<path d="M8.8 9.5 Q8.8 5.5 12.5 5.5 Q16.3 5.5 16.3 9 Q16.3 11 14 12.3 Q12.6 13 12.6 15" fill="none" stroke="#fff" stroke-width="2.6"/>
<rect x="11" y="16.8" width="3.2" height="3" fill="#fff"/></svg>
<svg style="left:2214px;top:25px" width="12" height="7" viewBox="0 0 12 7"><path d="M1 1 H11 L6 6 Z" fill="#333"/></svg>
<svg style="left:2240px;top:14px" width="30" height="30" viewBox="0 0 30 30">
<defs><clipPath id="av"><rect width="30" height="30" rx="2.5"/></clipPath></defs>
<g clip-path="url(#av)"><rect width="30" height="30" fill="#9a9a6a"/>
<rect x="0" y="18" width="12" height="12" fill="#8e9a55"/>
<path d="M3 12 Q8 6 18 4 Q28 6 30 14 V30 H10 Q12 22 6 18 Z" fill="#5d5149"/>
<path d="M14 20 Q20 16 30 20 V30 H12 Z" fill="#2c2724"/>
<path d="M18 23 Q24 21 28 26 L24 30 H18 Z" fill="#d9d0c4"/>
<ellipse cx="11" cy="8" rx="3" ry="2.6" fill="#c9b98a"/><ellipse cx="18" cy="11" rx="3.3" ry="3" fill="#c4b27d"/>
<ellipse cx="11" cy="8" rx="1.8" ry="1.5" fill="#777"/><ellipse cx="18" cy="11" rx="2" ry="1.8" fill="#777"/>
<circle cx="5.5" cy="14" r="1.7" fill="#111"/></g></svg>
<div class="t" style="left:2277.4px;top:17.9px;font-size:17.3px;color:#333;font-weight:normal;font-style:normal;letter-spacing:-0.07px;">Jonathan Mi</div>
<svg style="left:2380px;top:23px" width="12" height="7" viewBox="0 0 12 7"><path d="M1 1 H11 L6 6 Z" fill="#333"/></svg>
<div class="a" style="left:0;top:1278px;width:16px;height:16px;background:#b2b2b2"></div>
<div class="a" style="left:0;top:51px;width:50px;height:1242px;background:#f9f9f9;border-right:1px solid #d4d4d4;border-top:1px solid #d8d8d8;border-bottom-left-radius:9px"></div>
<div class="a" style="left:50px;top:51px;width:2347px;height:46px;background:#fff"></div>
<div class="a" style="left:0;top:227px;width:49px;height:1px;background:#dedede"></div>
<svg style="left:14px;top:105px" width="24" height="25" viewBox="0 0 24 25"><path d="M5.5 1 V6 M5.5 18 V23.5" stroke="#333" stroke-width="2.2" stroke-dasharray="2.2 1.6"/><circle cx="5.5" cy="12" r="3.6" fill="#333"/><path d="M11 15 H21 M16 10 V20" stroke="#1f55c0" stroke-width="2.6"/></svg>
<svg style="left:12px;top:150px" width="26" height="23" viewBox="0 0 26 23"><ellipse cx="13" cy="8.5" rx="12" ry="7.5" fill="#333"/><path d="M6 13 L1 21.5 L12 15 Z" fill="#333"/></svg>
<svg style="left:12px;top:193px" width="25" height="25" viewBox="0 0 25 25"><circle cx="14" cy="13.5" r="9" fill="none" stroke="#333" stroke-width="2.3"/><path d="M11 1.5 H17 M14 1.5 V4 M21 4.5 L23 6.5" stroke="#333" stroke-width="2"/><path d="M14 13.5 L17 10" stroke="#333" stroke-width="2"/><path d="M1 14 H6 M2 11 H6.5 M2 17 H6.5" stroke="#fff" stroke-width="1"/><path d="M0.5 15.5 H5.5 M1.5 12 H5.5" stroke="#333" stroke-width="1"/></svg>
<svg style="left:14px;top:238px" width="21" height="24" viewBox="0 0 21 24"><rect x="1.5" y="1.5" width="17.5" height="20.5" rx="2" fill="none" stroke="#333" stroke-width="2.2"/><path d="M4 6 L5.5 7.5 L8 4.5 M4 11 L5.5 12.5 L8 9.5 M4 16 L5.5 17.5 L8 14.5" fill="none" stroke="#333" stroke-width="1.1"/><path d="M9.5 6.5 H16 M9.5 11.5 H16 M9.5 16.5 H16" stroke="#333" stroke-width="2.3"/></svg>
<svg style="left:0;top:1260px" width="50" height="34" viewBox="0 1260 50 34"><path d="M13 1269.3 Q13 1268.3 14 1268.3 H35 Q36 1268.3 36 1269.3 V1279 H13 Z" fill="#333"/><circle cx="25.5" cy="1278.5" r="7" fill="#f9f9f9"/><circle cx="25.5" cy="1278.5" r="4.6" fill="#f9f9f9" stroke="#222" stroke-width="2.3"/><path d="M29 1282 L34.5 1287" stroke="#222" stroke-width="2.8"/></svg>
<svg style="left:12px;top:62px" width="26" height="24" viewBox="0 0 26 24"><circle cx="4.5" cy="4.5" r="3.3" fill="none" stroke="#333" stroke-width="1.9"/><path d="M4.5 8 V19.5 M4.5 16 Q5 12.5 9 11" fill="none" stroke="#333" stroke-width="2"/><circle cx="4.5" cy="19.5" r="2.3" fill="#333"/><circle cx="9.5" cy="11" r="2" fill="#333"/><path d="M10.5 2.5 H25 M14 8 H25 M14 14 H25 M10.5 19.5 H25" stroke="#333" stroke-width="2.3"/></svg>
<svg style="left:62px;top:63px" width="19" height="20" viewBox="0 0 19 20"><path d="M1 7 L8 1 V5 Q17 5 17.5 13.5 Q17.5 16.5 15.5 18.5 Q16 10 8 10 V13.5 Z" fill="#333"/></svg>
<svg style="left:106px;top:63px" width="19" height="20" viewBox="0 0 19 20"><path d="M18 7 L11 1 V5 Q2 5 1.5 13.5 Q1.5 16.5 3.5 18.5 Q3 10 11 10 V13.5 Z" fill="#a6a6a6"/></svg>
<div class="a" style="left:138px;top:57px;width:2px;height:33px;background:#d0d0d0"></div>
<svg style="left:150px;top:61px" width="25" height="25" viewBox="0 0 25 25"><path d="M1.5 4 L4 1.5 H21 L23.5 4 V23 H4 L1.5 20.5 Z" fill="#fff" stroke="#333" stroke-width="1.1"/><path d="M1.5 4 H21 V23 M21 4 L23.5 1.5" fill="none" stroke="#333" stroke-width="1.1"/><path d="M8.5 10.5 L10.5 8.5 H22 V23.5 H8.5 Z" fill="#9a9a9a" stroke="#333" stroke-width="1.1"/><path d="M8.5 10.5 H20 V23.5 M20 10.5 L22 8.5" fill="none" stroke="#333" stroke-width="1"/></svg>
<svg style="left:194px;top:62px" width="24" height="24" viewBox="0 0 24 24"><path d="M12 1 A11 11 0 1 0 21 17.5 L15 14.5 A4 4 0 1 1 15 9.5 L21 6.5 A11 11 0 0 0 12 1 Z" fill="#8d8d8d" stroke="#333" stroke-width="1.2"/><ellipse cx="18.5" cy="6.5" rx="2.5" ry="1.8" fill="#fff" stroke="#333" stroke-width="0.8"/><ellipse cx="18.5" cy="17.5" rx="2.5" ry="1.8" fill="#fff" stroke="#333" stroke-width="0.8"/><path d="M7 12 H23" stroke="#333" stroke-width="1" stroke-dasharray="2 1.5"/></svg>
<div class="a" style="left:228px;top:57px;width:2px;height:33px;background:#d0d0d0"></div>
<svg style="left:240px;top:61px" width="25" height="26" viewBox="0 0 25 26"><path d="M3.5 22.5 L21.5 3.5" stroke="#333" stroke-width="1.6"/><circle cx="3.5" cy="22.5" r="2.3" fill="#fff" stroke="#1f5bc4" stroke-width="1.1"/><circle cx="21.5" cy="3.5" r="2.3" fill="#fff" stroke="#1f5bc4" stroke-width="1.1"/></svg>
<svg style="left:277px;top:69px" width="13" height="8" viewBox="0 0 13 8"><path d="M1.2 1.2 L6.5 6.3 L11.8 1.2" fill="none" stroke="#333" stroke-width="2.3"/></svg>
<svg style="left:305px;top:61px" width="25" height="26" viewBox="0 0 25 26"><rect x="2.5" y="4.5" width="19" height="17.5" fill="none" stroke="#333" stroke-width="1.6"/><circle cx="2.8" cy="22.5" r="2.3" fill="#fff" stroke="#1f5bc4" stroke-width="1.1"/><circle cx="21.5" cy="3.5" r="2.3" fill="#fff" stroke="#1f5bc4" stroke-width="1.1"/></svg>
<svg style="left:342.5px;top:69px" width="13" height="8" viewBox="0 0 13 8"><path d="M1.2 1.2 L6.5 6.3 L11.8 1.2" fill="none" stroke="#333" stroke-width="2.3"/></svg>
<svg style="left:370px;top:61px" width="25" height="26" viewBox="0 0 25 26"><circle cx="12" cy="14" r="11" fill="none" stroke="#333" stroke-width="1.4"/><circle cx="12" cy="14" r="1.8" fill="none" stroke="#1f5bc4" stroke-width="1"/><circle cx="19.5" cy="6" r="2" fill="#fff" stroke="#1f5bc4" stroke-width="1"/></svg>
<svg style="left:407.5px;top:69px" width="13" height="8" viewBox="0 0 13 8"><path d="M1.2 1.2 L6.5 6.3 L11.8 1.2" fill="none" stroke="#333" stroke-width="2.3"/></svg>
<svg style="left:435px;top:63px" width="25" height="22" viewBox="0 0 25 22"><path d="M3 16.5 Q4 4 12 4 Q20 4 21 16.5" fill="none" stroke="#333" stroke-width="1.4"/><circle cx="3" cy="17" r="2" fill="#fff" stroke="#1f5bc4" stroke-width="1"/><circle cx="21" cy="17" r="2" fill="#fff" stroke="#1f5bc4" stroke-width="1"/><circle cx="12" cy="4" r="2" fill="#fff" stroke="#1f5bc4" stroke-width="1"/><path d="M9.5 15.5 H14.5 M12 13 V18" stroke="#333" stroke-width="1.3"/></svg>
<svg style="left:472.5px;top:69px" width="13" height="8" viewBox="0 0 13 8"><path d="M1.2 1.2 L6.5 6.3 L11.8 1.2" fill="none" stroke="#333" stroke-width="2.3"/></svg>
<svg style="left:501px;top:62px" width="24" height="24" viewBox="0 0 24 24"><path d="M11 1.5 L21.5 9.5 L17.5 22 H4.5 L0.5 9.5 Z" fill="none" stroke="#333" stroke-width="1.5"/><circle cx="11" cy="13" r="9" fill="none" stroke="#1f5bc4" stroke-width="0.9"/><circle cx="11" cy="13" r="2" fill="none" stroke="#1f5bc4" stroke-width="0.9"/><circle cx="16.5" cy="5.5" r="2" fill="#fff" stroke="#1f5bc4" stroke-width="1"/></svg>
<svg style="left:537.5px;top:69px" width="13" height="8" viewBox="0 0 13 8"><path d="M1.2 1.2 L6.5 6.3 L11.8 1.2" fill="none" stroke="#333" stroke-width="2.3"/></svg>
<svg style="left:565px;top:61px" width="25" height="26" viewBox="0 0 25 26"><path d="M3 21.5 Q5 15 9 13.5 T15 10 Q20 9 21.5 4" fill="none" stroke="#333" stroke-width="1.4"/><circle cx="3" cy="21.5" r="2" fill="#fff" stroke="#1f5bc4" stroke-width="1"/><circle cx="11" cy="12.5" r="2" fill="#fff" stroke="#1f5bc4" stroke-width="1"/><circle cx="21.5" cy="3.5" r="2" fill="#fff" stroke="#1f5bc4" stroke-width="1"/></svg>
<svg style="left:602.5px;top:69px" width="13" height="8" viewBox="0 0 13 8"><path d="M1.2 1.2 L6.5 6.3 L11.8 1.2" fill="none" stroke="#333" stroke-width="2.3"/></svg>
<svg style="left:637px;top:69px" width="10" height="10" viewBox="0 0 10 10"><circle cx="5" cy="4.5" r="3.6" fill="none" stroke="#1f5bc4" stroke-width="1.6"/></svg>
<svg style="left:672px;top:60px" width="27" height="27" viewBox="0 0 27 27"><rect x="1.5" y="3.5" width="21" height="21" fill="none" stroke="#999" stroke-width="0.8" stroke-dasharray="1.5 1"/><path d="M4 23 L11 4 H14 L21 23 H17 L15.5 18.5 H9.5 L8 23 Z M10.5 15 H14.5 L12.5 9 Z" fill="#fff" stroke="#333" stroke-width="1.3"/><circle cx="2" cy="24.5" r="2" fill="#fff" stroke="#1f5bc4" stroke-width="1"/><circle cx="23" cy="2.5" r="2" fill="#fff" stroke="#1f5bc4" stroke-width="1"/></svg>
<svg style="left:716px;top:62px" width="24" height="24" viewBox="0 0 24 24"><path d="M1 4 L4.5 1 H20 L22.5 4 V21 H4.5 L1 18 Z" fill="#fff" stroke="#333" stroke-width="1.2"/><path d="M4.5 4 H22.5 M4.5 4 V21 M1 4 L4.5 4" fill="none" stroke="#333" stroke-width="1.2"/><path d="M4.5 4 V21" stroke="#1f5bc4" stroke-width="2"/></svg>
<svg style="left:752.5px;top:69px" width="13" height="8" viewBox="0 0 13 8"><path d="M1.2 1.2 L6.5 6.3 L11.8 1.2" fill="none" stroke="#333" stroke-width="2.3"/></svg>
<svg style="left:781px;top:62px" width="23" height="24" viewBox="0 0 23 24"><path d="M1.8 1.5 V22.5" stroke="#1f5bc4" stroke-width="2.4"/><path d="M20 1.5 V22.5" stroke="#333" stroke-width="2.2" stroke-dasharray="3 2.5"/><path d="M16 7 H7 L9.5 4.8 M7 7 L9.5 9" fill="none" stroke="#333" stroke-width="1.3"/><path d="M7 15 H16 L13.5 12.8 M16 15 L13.5 17.2" fill="none" stroke="#1f5bc4" stroke-width="1.3"/></svg>
<div class="a" style="left:816px;top:57px;width:2px;height:33px;background:#d0d0d0"></div>
<svg style="left:828px;top:62px" width="24" height="24" viewBox="0 0 24 24"><path d="M2 22 V14 Q3 5 12 3.5 H21.5" fill="none" stroke="#333" stroke-width="2.2"/><path d="M2 17.5 V23.5 M15.5 3.5 H21.5" stroke="#1f5bc4" stroke-width="1.4"/><path d="M2.5 3.5 H12 M2.5 3.5 V10" stroke="#888" stroke-width="0.7" stroke-dasharray="1.2 1"/></svg>
<svg style="left:872px;top:63px" width="21" height="21" viewBox="0 0 21 21"><circle cx="3.5" cy="17.5" r="2.6" fill="none" stroke="#333" stroke-width="1.8"/><circle cx="3.5" cy="3.5" r="2.6" fill="none" stroke="#333" stroke-width="1.8"/><path d="M5.5 15.5 L19 1.5 M5.5 5.5 L19 19.5" stroke="#333" stroke-width="2.2"/></svg>
<svg style="left:907.5px;top:69px" width="13" height="8" viewBox="0 0 13 8"><path d="M1.2 1.2 L6.5 6.3 L11.8 1.2" fill="none" stroke="#333" stroke-width="2.3"/></svg>
<svg style="left:938px;top:62px" width="20" height="24" viewBox="0 0 20 24"><path d="M1.5 22 V7 Q1.5 1.5 7.5 1.5 Q12.5 1.5 12.5 8 H17 V22 H9 V19" fill="none" stroke="#333" stroke-width="1.3"/><path d="M4 22 V8 Q4 4 7.5 4 Q10 4 10 9 V11 H14.5 V19.5 H8.5" fill="none" stroke="#1f5bc4" stroke-width="1.3"/></svg>
<svg style="left:972.5px;top:69px" width="13" height="8" viewBox="0 0 13 8"><path d="M1.2 1.2 L6.5 6.3 L11.8 1.2" fill="none" stroke="#333" stroke-width="2.3"/></svg>
<svg style="left:1000px;top:62px" width="25" height="24" viewBox="0 0 25 24"><path d="M1.5 1.5 H5 V18.5 H10 V22 H1.5 Z" fill="none" stroke="#333" stroke-width="1.8"/><path d="M23 1.5 H19.5 V18.5 H14.5 V22 H23 Z" fill="none" stroke="#1f5bc4" stroke-width="1.6"/><path d="M12.2 8 V22" stroke="#333" stroke-width="1" stroke-dasharray="2 1.5"/></svg>
<svg style="left:1044px;top:62px" width="23" height="24" viewBox="0 0 23 24"><rect x="1.5" y="2.5" width="7" height="7" fill="none" stroke="#333" stroke-width="1.6"/><rect x="12.5" y="2.5" width="9" height="7" fill="none" stroke="#1f5bc4" stroke-width="1.6"/><rect x="1.5" y="14.5" width="7" height="7.5" fill="none" stroke="#1f5bc4" stroke-width="1.6"/><rect x="12.5" y="14.5" width="9" height="7.5" fill="none" stroke="#1f5bc4" stroke-width="1.6"/></svg>
<svg style="left:1079.5px;top:69px" width="13" height="8" viewBox="0 0 13 8"><path d="M1.2 1.2 L6.5 6.3 L11.8 1.2" fill="none" stroke="#333" stroke-width="2.3"/></svg>
<svg style="left:1109px;top:61px" width="23" height="26" viewBox="0 0 23 26"><path d="M1.5 3 H14 L21 10 V24 Q21 25 20 25 H2.5 Q1.5 25 1.5 24 Z" fill="#fff" stroke="#333" stroke-width="1.4"/><path d="M14 3 V10 H21" fill="none" stroke="#333" stroke-width="1"/><path d="M9.5 4 V12 M6.5 9 L9.5 12.5 L12.5 9" fill="none" stroke="#333" stroke-width="1.8"/><text x="11" y="22" font-family="Liberation Sans" font-weight="bold" font-size="7.5" fill="#333" text-anchor="middle">DXF</text></svg>
<svg style="left:1144.5px;top:69px" width="13" height="8" viewBox="0 0 13 8"><path d="M1.2 1.2 L6.5 6.3 L11.8 1.2" fill="none" stroke="#333" stroke-width="2.3"/></svg>
<div class="a" style="left:1165.5px;top:57px;width:2px;height:33px;background:#d0d0d0"></div>
<svg style="left:1179px;top:62px" width="23" height="24" viewBox="0 0 23 24"><path d="M3 20 L18.5 5" stroke="#333" stroke-width="1.8"/><path d="M1.5 21.5 L3 15.5 L7.5 20 Z M20 3.5 L14 5 L18.5 9.5 Z" fill="#333"/><path d="M1.5 17 L6.5 22.5 M16 1.5 L21.5 7" stroke="#333" stroke-width="1"/></svg>
<div class="a" style="left:1213px;top:57px;width:2px;height:33px;background:#d0d0d0"></div>
<svg style="left:1225px;top:62px" width="24" height="23" viewBox="0 0 24 23"><path d="M1.5 20 L21 1.5" stroke="#1f5bc4" stroke-width="1.4"/><path d="M10 10 L21 21" stroke="#333" stroke-width="2.2"/><circle cx="10" cy="10.5" r="2.6" fill="#333"/></svg>
<svg style="left:1270px;top:63px" width="22" height="21" viewBox="0 0 22 21"><circle cx="10.5" cy="10.5" r="9.3" fill="none" stroke="#1f5bc4" stroke-width="1.4"/><circle cx="10.5" cy="10.5" r="5.5" fill="none" stroke="#333" stroke-width="2"/></svg>
<svg style="left:1311px;top:62px" width="22" height="22" viewBox="0 0 22 22"><path d="M1.5 5 L15.5 20.5" stroke="#333" stroke-width="2.2"/><path d="M6 1.5 L20.5 17.5" stroke="#1f5bc4" stroke-width="1.4"/></svg>
<svg style="left:1354px;top:62px" width="23" height="22" viewBox="0 0 23 22"><path d="M1.5 19.5 L19.5 1.5" stroke="#333" stroke-width="2.2"/><circle cx="14.5" cy="14.5" r="5.3" fill="none" stroke="#1f5bc4" stroke-width="1.4"/></svg>
<div class="a" style="left:1397px;top:71.8px;width:21px;height:3px;background:#333"></div>
<div class="a" style="left:1449px;top:63.5px;width:3px;height:20px;background:#333"></div>
<svg style="left:1480px;top:62px" width="25" height="23" viewBox="0 0 25 23"><path d="M1 20.5 H23.5" stroke="#333" stroke-width="2.2"/><path d="M11 1.5 V20" stroke="#1f5bc4" stroke-width="1.4"/><path d="M11 11.5 H16.5 V20" fill="none" stroke="#333" stroke-width="1.3"/></svg>
<div class="a" style="left:1529px;top:69.8px;width:13px;height:2.4px;background:#333"></div><div class="a" style="left:1529px;top:74.6px;width:13px;height:2.4px;background:#333"></div>
<svg style="left:1565px;top:68px" width="25" height="12" viewBox="0 0 25 12"><path d="M0.5 6 H5 M19.5 6 H24" stroke="#1f5bc4" stroke-width="1.3"/><circle cx="12" cy="6" r="3" fill="#333"/></svg>
<svg style="left:1610px;top:63px" width="21" height="21" viewBox="0 0 21 21"><path d="M1 5 Q8 5 12 19" fill="none" stroke="#1f5bc4" stroke-width="1.3"/><path d="M9 9 L18.5 0.5" stroke="#333" stroke-width="2"/></svg>
<svg style="left:1651px;top:62px" width="22" height="22" viewBox="0 0 22 22"><path d="M1.5 1 Q2 13 6 16.5 Q9.5 19.5 20 19.5" fill="none" stroke="#1f5bc4" stroke-width="1.2"/><path d="M6.5 16 Q10 13 11.5 8 Q13.5 3 17 2" fill="none" stroke="#333" stroke-width="2.2"/><circle cx="6" cy="16" r="2.2" fill="#333"/></svg>
<svg style="left:1693px;top:62px" width="25" height="23" viewBox="0 0 25 23"><path d="M10.5 2 H2 L9 11 L2 20.5 H10.5" fill="none" stroke="#333" stroke-width="1.8"/><path d="M14.5 2 H23 L16 11 L23 20.5 H14.5" fill="none" stroke="#1f5bc4" stroke-width="1.4"/><path d="M12.5 1 V22" stroke="#333" stroke-width="0.9" stroke-dasharray="3 1.5"/></svg>
<svg style="left:1736px;top:70px" width="23" height="9" viewBox="0 0 23 9"><path d="M1 1.8 H21.5" stroke="#1f5bc4" stroke-width="2.4"/><path d="M2 7.5 L5 3.5 M7 7.5 L10 3.5 M12 7.5 L15 3.5 M17 7.5 L20 3.5" stroke="#333" stroke-width="1"/></svg>
<svg style="left:1777px;top:62px" width="27" height="23" viewBox="0 0 27 23"><path d="M4 21.5 Q6 8 13 7 Q20 8 21.5 21.5" fill="none" stroke="#333" stroke-width="1.6"/><path d="M4 21.5 Q6 8 13 7" fill="none" stroke="#1f5bc4" stroke-width="1.8"/><path d="M1 19 L4 19.5 M1.5 15 L4.5 16 M3 11 L6 12.5 M5.5 7 L8 9 M9 4 L10.5 6.5 M13 2 V5 M17 4 L15.5 6.5 M20.5 7 L18 9 M23 11 L20 12.5 M24.5 15 L21.5 16 M25 19 L22 19.5" stroke="#555" stroke-width="0.7"/></svg>
<div class="a" style="left:1825px;top:53px;width:221px;height:41px;background:#eeeeee;border-radius:5px"></div>
<div class="t" style="left:1838.2px;top:65.5px;font-size:16.8px;color:#333;font-weight:normal;font-style:normal;letter-spacing:0.00px;">Search tools...</div>
<div class="a" style="left:1951.4px;top:64.2px;width:26.8px;height:22.3px;border:1px solid #a9a9a9;border-bottom:2px solid #a0a0a0;border-radius:2.5px;background:#efefef"></div>
<div class="t" style="left:1954.7px;top:67.0px;font-size:15px;color:#333;font-weight:normal;font-style:normal;letter-spacing:0.00px;">ctrl</div>
<div class="a" style="left:1979.6px;top:64.2px;width:31.7px;height:22.3px;border:1px solid #a9a9a9;border-bottom:2px solid #a0a0a0;border-radius:2.5px;background:#efefef"></div>
<div class="t" style="left:1982.5px;top:67.0px;font-size:15px;color:#333;font-weight:normal;font-style:normal;letter-spacing:-0.30px;">shift</div>
<div class="a" style="left:2012.7px;top:64.2px;width:20.9px;height:22.3px;border:1px solid #a9a9a9;border-bottom:2px solid #a0a0a0;border-radius:2.5px;background:#efefef"></div>
<div class="t" style="left:2019.5px;top:67.0px;font-size:15px;color:#333;font-weight:normal;font-style:normal;letter-spacing:-1.34px;">p</div>
<div class="a" style="left:50px;top:96px;width:257px;height:1px;background:#d2d2d2"></div>
<div class="a" style="left:306px;top:96px;width:2px;height:1161px;background:#d4d4d4"></div>
<svg style="left:63px;top:116px;" width="21" height="21" viewBox="0 0 21 21"><path d="M1 1.5 H19.5 L12 10 V19.5 L9 17 V10 Z" fill="none" stroke="#333" stroke-width="1.3" stroke-linejoin="round"/></svg>
<div class="a" style="left:99.4px;top:106.4px;width:196px;height:36.5px;border:1px solid #ababab;border-radius:4px;background:#fff"></div>
<div class="t" style="left:107.0px;top:117.7px;font-size:16px;color:#8b8b8b;font-weight:normal;font-style:italic;letter-spacing:-0.01px;">Filter by name or type</div>
<div class="t" style="left:55.6px;top:153.9px;font-size:15.8px;color:#2f2f2f;font-weight:bold;font-style:normal;letter-spacing:0.08px;">Features (34)</div>
<svg style="left:219px;top:154px;" width="25" height="19" viewBox="0 0 25 19"><path d="M1.5 3.5 V1.5 H8 L9.5 3.5 H22.5 V17.5 H8" fill="none" stroke="#999" stroke-width="1.1"/><path d="M1.5 14 V17.5 H4" fill="none" stroke="#999" stroke-width="1.1"/><path d="M2.5 11 H9.5 M6 7.5 V14.5" stroke="#7a9fe0" stroke-width="1.9"/></svg>
<svg style="left:257px;top:151px;" width="23" height="24" viewBox="0 0 23 24"><circle cx="11.5" cy="13" r="8.8" fill="none" stroke="#2a2a2a" stroke-width="2.2"/><path d="M8.5 1.5 H14.5 M11.5 1.5 V4 M18 4 L20 6" stroke="#2a2a2a" stroke-width="2"/><path d="M11.5 13 L8.5 10" stroke="#2a2a2a" stroke-width="1.6"/></svg>
<div class="a" style="left:279.2px;top:181px;width:20.6px;height:633px;background:#f1f1f1"></div>
<div class="a" style="left:281.4px;top:370.4px;width:16.4px;height:273.3px;background:#c1c1c1"></div>
<svg style="left:284.5px;top:189.5px;" width="10" height="6" viewBox="0 0 10 6"><path d="M0.5 5.5 L5 0.5 L9.5 5.5 Z" fill="#505050"/></svg>
<svg style="left:284.5px;top:798.5px;" width="10" height="6" viewBox="0 0 10 6"><path d="M0.5 0.5 L5 5.5 L9.5 0.5 Z" fill="#505050"/></svg>
<div class="a" style="left:50px;top:181px;width:229px;height:633px;overflow:hidden">
<div class="a" style="left:0;top:553.2px;width:229px;height:29px;background:#eaeef3"></div>
<div class="a" style="left:0;top:582px;width:229px;height:1.3px;background:#8fcdf3"></div>
<div class="a" style="left:0;top:585.2px;width:229px;height:29.8px;background:#b3dcf4"></div>
<div class="a" style="left:11.299999999999997px;top:0px;width:1.4px;height:94.5px;background:#c8c8c8"></div>
<div class="a" style="left:6.5px;top:94.0px;width:11px;height:1.3px;background:#c8c8c8"></div>
<div class="a" style="left:11.299999999999997px;top:129px;width:1.4px;height:160.5px;background:#c8c8c8"></div>
<div class="a" style="left:6.5px;top:289.0px;width:11px;height:1.3px;background:#c8c8c8"></div>
<div class="a" style="left:11.299999999999997px;top:323.7px;width:1.4px;height:129.00000000000006px;background:#c8c8c8"></div>
<div class="a" style="left:6.5px;top:452.20000000000005px;width:11px;height:1.3px;background:#c8c8c8"></div>
<div class="a" style="left:11.299999999999997px;top:486px;width:1.4px;height:64px;background:#c8c8c8"></div>
<div class="a" style="left:6.5px;top:549.5px;width:11px;height:1.3px;background:#c8c8c8"></div>
<div class="a" style="left:11.299999999999997px;top:585px;width:1.4px;height:48px;background:#c8c8c8"></div>
<svg style="left:26px;top:1.0000000000000107px;" width="30" height="30" viewBox="0 0 30 30"><path d="M5.2 4.2 H20.8 L23.7 7.3 V22.7 H8.2 L5.2 19.6 Z" fill="#fff" stroke="#555" stroke-width="1.1" stroke-linejoin="round"/><path d="M5.2 4.2 L8.4 7.5 H23.7 M8.4 7.5 V22.7" fill="none" stroke="#555" stroke-width="0.8"/><path d="M11.3 10.5 H20.6 L23.7 13.3 V22.7 H14.3 L11.3 19.6 Z" fill="#adadad" stroke="#555" stroke-width="1"/><path d="M11.3 10.5 L14.3 13.3 H23.7 M14.3 13.3 V22.7" fill="none" stroke="#555" stroke-width="0.9"/></svg>
<div class="t" style="left:56.7px;top:7.3px;font-size:16px;color:#333;font-weight:normal;font-style:normal;letter-spacing:0.00px;">Inner Tube Holes</div>
<svg style="left:26px;top:33.000000000000014px;" width="30" height="30" viewBox="0 0 30 30"><path d="M6.5 21.7 L9 16.3 L19.6 5 L23.3 8.5 L12.5 19.3 Z" fill="#fff" stroke="#777" stroke-width="0.95" stroke-linejoin="round"/><path d="M9 16.3 Q9.5 18.8 12.5 19.3" fill="none" stroke="#777" stroke-width="0.8"/><path d="M5 22.6 H24" stroke="#8fb0e0" stroke-width="1.2"/></svg>
<div class="t" style="left:56.7px;top:39.8px;font-size:16px;color:#a5a5a5;font-weight:normal;font-style:normal;letter-spacing:0.00px;">Outer Tube Holes</div>
<svg style="left:26px;top:66.00000000000001px;" width="30" height="30" viewBox="0 0 30 30"><path d="M5.2 4.2 H20.8 L23.7 7.3 V22.7 H8.2 L5.2 19.6 Z" fill="#fff" stroke="#555" stroke-width="1.1" stroke-linejoin="round"/><path d="M5.2 4.2 L8.4 7.5 H23.7 M8.4 7.5 V22.7" fill="none" stroke="#555" stroke-width="0.8"/><path d="M11.3 10.5 H20.6 L23.7 13.3 V22.7 H14.3 L11.3 19.6 Z" fill="#adadad" stroke="#555" stroke-width="1"/><path d="M11.3 10.5 L14.3 13.3 H23.7 M14.3 13.3 V22.7" fill="none" stroke="#555" stroke-width="0.9"/></svg>
<div class="t" style="left:56.7px;top:72.3px;font-size:16px;color:#333;font-weight:normal;font-style:normal;letter-spacing:0.00px;">Outer Tube Holes</div>
<svg style="left:5px;top:107.30000000000001px;" width="16" height="10" viewBox="0 0 16 10"><path d="M1.5 1.5 L8 8 L14.5 1.5" fill="none" stroke="#555" stroke-width="2.4"/></svg>
<svg style="left:31.700000000000003px;top:103.30000000000001px;" width="20" height="16" viewBox="0 0 20 16"><path d="M1 1 H8 L9.5 3.5 H18.8 V15 H1 Z" fill="#fff" stroke="#555" stroke-width="0.9"/></svg>
<div class="t" style="left:57.6px;top:104.8px;font-size:16px;color:#333;font-weight:normal;font-style:normal;letter-spacing:0.00px;">Crush Block (5)</div>
<svg style="left:26px;top:130.5px;" width="30" height="30" viewBox="0 0 30 30"><path d="M6.5 21.7 L9 16.3 L19.6 5 L23.3 8.5 L12.5 19.3 Z" fill="#fff" stroke="#777" stroke-width="0.95" stroke-linejoin="round"/><path d="M9 16.3 Q9.5 18.8 12.5 19.3" fill="none" stroke="#777" stroke-width="0.8"/><path d="M5 22.6 H24" stroke="#8fb0e0" stroke-width="1.2"/></svg>
<div class="t" style="left:56.7px;top:137.3px;font-size:16px;color:#a5a5a5;font-weight:normal;font-style:normal;letter-spacing:0.00px;">Crush Block</div>
<svg style="left:26px;top:163.5px;" width="30" height="30" viewBox="0 0 30 30"><path d="M5.2 4.2 H20.8 L23.7 7.3 V22.7 H8.2 L5.2 19.6 Z" fill="#fff" stroke="#555" stroke-width="1.1" stroke-linejoin="round"/><path d="M5.2 4.2 L8.4 7.5 H23.7 M8.4 7.5 V22.7" fill="none" stroke="#555" stroke-width="0.8"/><path d="M11.3 10.5 H20.6 L23.7 13.3 V22.7 H14.3 L11.3 19.6 Z" fill="#adadad" stroke="#555" stroke-width="1"/><path d="M11.3 10.5 L14.3 13.3 H23.7 M14.3 13.3 V22.7" fill="none" stroke="#555" stroke-width="0.9"/></svg>
<div class="t" style="left:56.7px;top:169.8px;font-size:16px;color:#333;font-weight:normal;font-style:normal;letter-spacing:0.00px;">Crush Block Extrude</div>
<svg style="left:26px;top:196.0px;" width="30" height="30" viewBox="0 0 30 30"><path d="M5.2 4.2 H20.8 L23.7 7.3 V22.7 H8.2 L5.2 19.6 Z" fill="#fff" stroke="#555" stroke-width="1.1" stroke-linejoin="round"/><path d="M5.2 4.2 L8.4 7.5 H23.7 M8.4 7.5 V22.7" fill="none" stroke="#555" stroke-width="0.8"/><path d="M11.3 10.5 H20.6 L23.7 13.3 V22.7 H14.3 L11.3 19.6 Z" fill="#adadad" stroke="#555" stroke-width="1"/><path d="M11.3 10.5 L14.3 13.3 H23.7 M14.3 13.3 V22.7" fill="none" stroke="#555" stroke-width="0.9"/></svg>
<div class="t" style="left:56.7px;top:202.3px;font-size:16px;color:#333;font-weight:normal;font-style:normal;letter-spacing:0.00px;">Crush Block Flange</div>
<svg style="left:31px;top:232.3px;" width="20" height="20" viewBox="0 0 20 20"><path d="M1 18.5 V9 Q1 1 9 1 H18.5 V18.5 Z" fill="#fff" stroke="#444" stroke-width="0.9"/><path d="M4 18.5 V9 Q4 4 9 4 H18.5 M1.5 5 L4 7" fill="none" stroke="#444" stroke-width="0.8"/></svg>
<div class="t" style="left:56.7px;top:234.8px;font-size:16px;color:#333;font-weight:normal;font-style:normal;letter-spacing:0.00px;">Fillet 1</div>
<svg style="left:31px;top:264.8px;" width="20" height="20" viewBox="0 0 20 20"><path d="M1 18.5 V7 L7 1 H18.5 V18.5 Z" fill="#fff" stroke="#444" stroke-width="0.9"/><path d="M1 7 L4 7.5 L9.5 3.5 H18.5 M4 7.5 V18.5" fill="none" stroke="#444" stroke-width="0.8"/><path d="M1 7 L7 1 L18.5 1 L18.5 3.5 H9.5 L4 7.5 Z" fill="#ddd" stroke="#444" stroke-width="0.8"/></svg>
<div class="t" style="left:56.7px;top:267.3px;font-size:16px;color:#333;font-weight:normal;font-style:normal;letter-spacing:0.00px;">Chamfer 2</div>
<svg style="left:5px;top:302.3px;" width="16" height="10" viewBox="0 0 16 10"><path d="M1.5 1.5 L8 8 L14.5 1.5" fill="none" stroke="#555" stroke-width="2.4"/></svg>
<svg style="left:31.700000000000003px;top:298.3px;" width="20" height="16" viewBox="0 0 20 16"><path d="M1 1 H8 L9.5 3.5 H18.8 V15 H1 Z" fill="#fff" stroke="#555" stroke-width="0.9"/></svg>
<div class="t" style="left:57.6px;top:299.8px;font-size:16px;color:#333;font-weight:normal;font-style:normal;letter-spacing:0.00px;">Hooks (4)</div>
<svg style="left:26px;top:325.49999999999994px;" width="30" height="30" viewBox="0 0 30 30"><path d="M6.5 21.7 L9 16.3 L19.6 5 L23.3 8.5 L12.5 19.3 Z" fill="#fff" stroke="#777" stroke-width="0.95" stroke-linejoin="round"/><path d="M9 16.3 Q9.5 18.8 12.5 19.3" fill="none" stroke="#777" stroke-width="0.8"/><path d="M5 22.6 H24" stroke="#8fb0e0" stroke-width="1.2"/></svg>
<div class="t" style="left:56.7px;top:332.3px;font-size:16px;color:#a5a5a5;font-weight:normal;font-style:normal;letter-spacing:0.00px;">Hook Sketch</div>
<svg style="left:26px;top:358.49999999999994px;" width="30" height="30" viewBox="0 0 30 30"><path d="M5.2 4.2 H20.8 L23.7 7.3 V22.7 H8.2 L5.2 19.6 Z" fill="#fff" stroke="#555" stroke-width="1.1" stroke-linejoin="round"/><path d="M5.2 4.2 L8.4 7.5 H23.7 M8.4 7.5 V22.7" fill="none" stroke="#555" stroke-width="0.8"/><path d="M11.3 10.5 H20.6 L23.7 13.3 V22.7 H14.3 L11.3 19.6 Z" fill="#adadad" stroke="#555" stroke-width="1"/><path d="M11.3 10.5 L14.3 13.3 H23.7 M14.3 13.3 V22.7" fill="none" stroke="#555" stroke-width="0.9"/></svg>
<div class="t" style="left:56.7px;top:364.8px;font-size:16px;color:#333;font-weight:normal;font-style:normal;letter-spacing:0.00px;">Hook Extrude</div>
<svg style="left:26px;top:390.99999999999994px;" width="30" height="30" viewBox="0 0 30 30"><path d="M5.2 4.2 H20.8 L23.7 7.3 V22.7 H8.2 L5.2 19.6 Z" fill="#fff" stroke="#555" stroke-width="1.1" stroke-linejoin="round"/><path d="M5.2 4.2 L8.4 7.5 H23.7 M8.4 7.5 V22.7" fill="none" stroke="#555" stroke-width="0.8"/><path d="M11.3 10.5 H20.6 L23.7 13.3 V22.7 H14.3 L11.3 19.6 Z" fill="#adadad" stroke="#555" stroke-width="1"/><path d="M11.3 10.5 L14.3 13.3 H23.7 M14.3 13.3 V22.7" fill="none" stroke="#555" stroke-width="0.9"/></svg>
<div class="t" style="left:56.7px;top:397.3px;font-size:16px;color:#333;font-weight:normal;font-style:normal;letter-spacing:0.00px;">Bolt Hole Extrude</div>
<svg style="left:26px;top:418.99999999999994px;" width="30" height="32" viewBox="0 0 30 32"><path d="M18 17 L23.5 17 L16.7 28.7 L12 28.7 Z" fill="#e2e2e2"/><path d="M3.9 21.3 L10.2 8.6 Q11.5 7 14.5 7.8 Q20.5 9.8 23.2 13.2 Q24.3 15 23.4 17.2 L16.7 28.7" fill="none" stroke="#444" stroke-width="1.3" stroke-linejoin="round"/><path d="M11 10.5 Q15 15.5 22.5 17" fill="none" stroke="#666" stroke-width="0.7"/><path d="M14.5 11 Q16.5 12.5 18 12" fill="none" stroke="#777" stroke-width="1"/></svg>
<div class="t" style="left:56.7px;top:429.8px;font-size:16px;color:#333;font-weight:normal;font-style:normal;letter-spacing:-0.51px;">"ROUND Spa...</div>
<svg style="left:175.6px;top:424.99999999999994px;" width="8" height="24" viewBox="0 0 8 24"><rect x="2.8" y="0.4" width="2.4" height="2.6" fill="#333"/><rect x="2.8" y="4.3" width="2.4" height="2.6" fill="#333"/><circle cx="4" cy="11.4" r="3.6" fill="#333"/><rect x="2.8" y="15.8" width="2.4" height="2.6" fill="#333"/><rect x="2.8" y="19.8" width="2.4" height="2.6" fill="#333"/></svg>
<svg style="left:5px;top:464.79999999999995px;" width="16" height="10" viewBox="0 0 16 10"><path d="M1.5 1.5 L8 8 L14.5 1.5" fill="none" stroke="#555" stroke-width="2.4"/></svg>
<svg style="left:31.700000000000003px;top:460.79999999999995px;" width="20" height="16" viewBox="0 0 20 16"><path d="M1 1 H8 L9.5 3.5 H18.8 V15 H1 Z" fill="#fff" stroke="#555" stroke-width="0.9"/></svg>
<div class="t" style="left:57.6px;top:462.3px;font-size:16px;color:#333;font-weight:normal;font-style:normal;letter-spacing:0.00px;">Hook Crush Block (2)</div>
<svg style="left:26px;top:487.99999999999994px;" width="30" height="30" viewBox="0 0 30 30"><path d="M6.5 21.7 L9 16.3 L19.6 5 L23.3 8.5 L12.5 19.3 Z" fill="#fff" stroke="#777" stroke-width="0.95" stroke-linejoin="round"/><path d="M9 16.3 Q9.5 18.8 12.5 19.3" fill="none" stroke="#777" stroke-width="0.8"/><path d="M5 22.6 H24" stroke="#8fb0e0" stroke-width="1.2"/></svg>
<div class="t" style="left:56.7px;top:494.8px;font-size:16px;color:#a5a5a5;font-weight:normal;font-style:normal;letter-spacing:0.00px;">Hook Crush Block P...</div>
<svg style="left:26px;top:521.0px;" width="30" height="30" viewBox="0 0 30 30"><path d="M5.2 4.2 H20.8 L23.7 7.3 V22.7 H8.2 L5.2 19.6 Z" fill="#fff" stroke="#555" stroke-width="1.1" stroke-linejoin="round"/><path d="M5.2 4.2 L8.4 7.5 H23.7 M8.4 7.5 V22.7" fill="none" stroke="#555" stroke-width="0.8"/><path d="M11.3 10.5 H20.6 L23.7 13.3 V22.7 H14.3 L11.3 19.6 Z" fill="#adadad" stroke="#555" stroke-width="1"/><path d="M11.3 10.5 L14.3 13.3 H23.7 M14.3 13.3 V22.7" fill="none" stroke="#555" stroke-width="0.9"/></svg>
<div class="t" style="left:56.7px;top:527.3px;font-size:16px;color:#333;font-weight:normal;font-style:normal;letter-spacing:0.00px;">Crush Block Extrude</div>
<svg style="left:5px;top:562.3px;" width="16" height="10" viewBox="0 0 16 10"><path d="M1.5 1.5 L8 8 L14.5 1.5" fill="none" stroke="#555" stroke-width="2.4"/></svg>
<svg style="left:31.700000000000003px;top:558.3px;" width="20" height="16" viewBox="0 0 20 16"><path d="M1 1 H8 L9.5 3.5 H18.8 V15 H1 Z" fill="#fafbfc" stroke="#555" stroke-width="0.9"/></svg>
<div class="t" style="left:57.6px;top:559.8px;font-size:16px;color:#333;font-weight:normal;font-style:normal;letter-spacing:0.00px;">Gearbox (8)</div>
<svg style="left:26px;top:585.5px;" width="30" height="30" viewBox="0 0 30 30"><path d="M6.5 21.7 L9 16.3 L19.6 5 L23.3 8.5 L12.5 19.3 Z" fill="#fff" stroke="#777" stroke-width="0.95" stroke-linejoin="round"/><path d="M9 16.3 Q9.5 18.8 12.5 19.3" fill="none" stroke="#777" stroke-width="0.8"/><path d="M5 22.6 H24" stroke="#8fb0e0" stroke-width="1.2"/></svg>
<div class="t" style="left:56.5px;top:592.3px;font-size:16px;color:#6f8796;font-weight:bold;font-style:normal;letter-spacing:-0.04px;">Gearbox Plate Ske...</div>
<svg style="left:31px;top:622.3px;" width="20" height="20" viewBox="0 0 20 20"><path d="M1 3 L3 1 H17 L19 3 V18.5 H3 L1 16.5 Z" fill="#fff" stroke="#bbb" stroke-width="0.9"/><path d="M6 9 H19 V18.8 H6 Z" fill="#ccc" stroke="#bbb" stroke-width="0.9"/></svg>
<div class="t" style="left:56.7px;top:624.8px;font-size:16px;color:#b0b0b0;font-weight:normal;font-style:italic;letter-spacing:0.00px;">Gearbox Extrude</div>
</div>
<div class="a" style="left:50px;top:813.3px;width:250px;height:2px;background:#d6d6d6"></div>
<svg style="left:55px;top:825.2px;" width="16" height="10" viewBox="0 0 16 10"><path d="M1.5 1.5 L8 8 L14.5 1.5" fill="none" stroke="#555" stroke-width="2.4"/></svg>
<div class="t" style="left:79.5px;top:822.7px;font-size:16px;color:#333;font-weight:normal;font-style:normal;letter-spacing:0.00px;">Parts (7)</div>
<svg style="left:76.0px;top:850.0px;" width="30" height="30" viewBox="0 0 30 30"><path d="M14 3.3 H19.8 L23.7 7 V21.6 H9.3 L5.2 17.8 V11.7 H14 Z" fill="#fff" stroke="#555" stroke-width="1.1" stroke-linejoin="round"/><path d="M14 3.3 L18 7.3 H23.7 M18 7.3 V16 M5.2 11.7 L9.5 16.2 H18 M9.5 16.2 V21.6" fill="none" stroke="#777" stroke-width="0.8"/><path d="M14 11.7 L18 16" stroke="#777" stroke-width="0.8" stroke-dasharray="1 1"/></svg>
<div class="t" style="left:106.3px;top:856.0px;font-size:16px;color:#333;font-weight:normal;font-style:normal;letter-spacing:0.00px;">Origin Cube</div>
<svg style="left:76.0px;top:882.47px;" width="30" height="30" viewBox="0 0 30 30"><path d="M14 3.3 H19.8 L23.7 7 V21.6 H9.3 L5.2 17.8 V11.7 H14 Z" fill="#fff" stroke="#555" stroke-width="1.1" stroke-linejoin="round"/><path d="M14 3.3 L18 7.3 H23.7 M18 7.3 V16 M5.2 11.7 L9.5 16.2 H18 M9.5 16.2 V21.6" fill="none" stroke="#777" stroke-width="0.8"/><path d="M14 11.7 L18 16" stroke="#777" stroke-width="0.8" stroke-dasharray="1 1"/></svg>
<div class="t" style="left:106.3px;top:888.4px;font-size:16px;color:#333;font-weight:normal;font-style:normal;letter-spacing:0.00px;">Tube 2"x2"x16"</div>
<svg style="left:76.0px;top:914.94px;" width="30" height="30" viewBox="0 0 30 30"><path d="M14 3.3 H19.8 L23.7 7 V21.6 H9.3 L5.2 17.8 V11.7 H14 Z" fill="#fff" stroke="#555" stroke-width="1.1" stroke-linejoin="round"/><path d="M14 3.3 L18 7.3 H23.7 M18 7.3 V16 M5.2 11.7 L9.5 16.2 H18 M9.5 16.2 V21.6" fill="none" stroke="#777" stroke-width="0.8"/><path d="M14 11.7 L18 16" stroke="#777" stroke-width="0.8" stroke-dasharray="1 1"/></svg>
<div class="t" style="left:106.3px;top:920.9px;font-size:16px;color:#333;font-weight:normal;font-style:normal;letter-spacing:0.00px;">Tube 1.5"x1.5"x18"</div>
<svg style="left:76.0px;top:947.41px;" width="30" height="30" viewBox="0 0 30 30"><path d="M14 3.3 H19.8 L23.7 7 V21.6 H9.3 L5.2 17.8 V11.7 H14 Z" fill="#fff" stroke="#555" stroke-width="1.1" stroke-linejoin="round"/><path d="M14 3.3 L18 7.3 H23.7 M18 7.3 V16 M5.2 11.7 L9.5 16.2 H18 M9.5 16.2 V21.6" fill="none" stroke="#777" stroke-width="0.8"/><path d="M14 11.7 L18 16" stroke="#777" stroke-width="0.8" stroke-dasharray="1 1"/></svg>
<div class="t" style="left:106.3px;top:953.4px;font-size:16px;color:#333;font-weight:normal;font-style:normal;letter-spacing:0.00px;">Crush Block</div>
<svg style="left:76.0px;top:979.88px;" width="30" height="30" viewBox="0 0 30 30"><path d="M14 3.3 H19.8 L23.7 7 V21.6 H9.3 L5.2 17.8 V11.7 H14 Z" fill="#fff" stroke="#555" stroke-width="1.1" stroke-linejoin="round"/><path d="M14 3.3 L18 7.3 H23.7 M18 7.3 V16 M5.2 11.7 L9.5 16.2 H18 M9.5 16.2 V21.6" fill="none" stroke="#777" stroke-width="0.8"/><path d="M14 11.7 L18 16" stroke="#777" stroke-width="0.8" stroke-dasharray="1 1"/></svg>
<div class="t" style="left:106.3px;top:985.8px;font-size:16px;color:#333;font-weight:normal;font-style:normal;letter-spacing:0.00px;">Climber Hook</div>
<svg style="left:76.0px;top:1012.3499999999999px;" width="30" height="30" viewBox="0 0 30 30"><path d="M14 3.3 H19.8 L23.7 7 V21.6 H9.3 L5.2 17.8 V11.7 H14 Z" fill="#fff" stroke="#555" stroke-width="1.1" stroke-linejoin="round"/><path d="M14 3.3 L18 7.3 H23.7 M18 7.3 V16 M5.2 11.7 L9.5 16.2 H18 M9.5 16.2 V21.6" fill="none" stroke="#777" stroke-width="0.8"/><path d="M14 11.7 L18 16" stroke="#777" stroke-width="0.8" stroke-dasharray="1 1"/></svg>
<div class="t" style="left:106.3px;top:1018.3px;font-size:16px;color:#333;font-weight:normal;font-style:normal;letter-spacing:0.00px;">Hook Spacer</div>
<svg style="left:76.0px;top:1044.82px;" width="30" height="30" viewBox="0 0 30 30"><path d="M14 3.3 H19.8 L23.7 7 V21.6 H9.3 L5.2 17.8 V11.7 H14 Z" fill="#fff" stroke="#555" stroke-width="1.1" stroke-linejoin="round"/><path d="M14 3.3 L18 7.3 H23.7 M18 7.3 V16 M5.2 11.7 L9.5 16.2 H18 M9.5 16.2 V21.6" fill="none" stroke="#777" stroke-width="0.8"/><path d="M14 11.7 L18 16" stroke="#777" stroke-width="0.8" stroke-dasharray="1 1"/></svg>
<div class="t" style="left:106.3px;top:1050.8px;font-size:16px;color:#333;font-weight:normal;font-style:normal;letter-spacing:0.00px;">Climber Hook Crush B...</div>
<div class="a" style="left:306px;top:644px;width:42px;height:43px;background:#fff;border:1px solid #9a9a9a;border-left:none"></div>
<svg style="left:314px;top:654px;" width="26" height="25" viewBox="0 0 26 25"><path d="M1.5 2 L4.5 5 L7.5 2" fill="none" stroke="#222" stroke-width="1.4"/><path d="M4.5 6.5 V22.5" stroke="#666" stroke-width="1.6"/><path d="M10.5 2.5 H23.5" stroke="#666" stroke-width="1.4"/><path d="M7 8.5 H23.5 M7 14.5 H23.5" stroke="#333" stroke-width="1.4"/><path d="M7 20.5 H23.5" stroke="#555" stroke-width="1.6"/></svg>
<div class="a" style="left:319px;top:100px;width:275px;height:274px;background:#fff;box-shadow:0 2px 9px rgba(0,0,0,0.28)"></div>
<div class="t" style="left:326.7px;top:111.1px;font-size:15.6px;color:#2e2e2e;font-weight:bold;font-style:normal;letter-spacing:-0.14px;">Gearbox Plate Sketch</div>
<div class="a" style="left:523.8px;top:100px;width:35.2px;height:34.8px;background:#0f990f"></div>
<svg style="left:523.8px;top:100px;" width="35" height="35" viewBox="0 0 35 35"><path d="M8.5 17.5 L15 24 L27 11" fill="none" stroke="#fff" stroke-width="3.6"/></svg>
<svg style="left:568px;top:110px;" width="18" height="17" viewBox="0 0 18 17"><path d="M2.5 2.5 L15.5 14.5 M15.5 2.5 L2.5 14.5" stroke="#cc3333" stroke-width="3.2"/></svg>
<div class="a" style="left:319px;top:134.8px;width:275px;height:1px;background:#dcdcdc"></div>
<div class="a" style="left:323.2px;top:142.2px;width:234.2px;height:53.3px;border:1px solid #dcdcdc;border-radius:2px"></div>
<div class="t" style="left:330.8px;top:151.6px;font-size:13px;color:#666;font-weight:normal;font-style:normal;letter-spacing:-0.31px;">Sketch plane</div>
<div class="t" style="left:331.0px;top:172.3px;font-size:16px;color:#555;font-weight:normal;font-style:normal;letter-spacing:0.04px;">Face of 2x2 Extrude</div>
<svg style="left:531.5px;top:176px;" width="12" height="11" viewBox="0 0 12 11"><path d="M1.5 1.5 L10.5 9.5 M10.5 1.5 L1.5 9.5" stroke="#555" stroke-width="1.3"/></svg>
<svg style="left:563px;top:146px;" width="24" height="24" viewBox="0 0 24 24"><circle cx="11.5" cy="11.5" r="10.2" fill="none" stroke="#444" stroke-width="1.2"/><circle cx="11.5" cy="11.5" r="8.2" fill="none" stroke="#444" stroke-width="1.3"/><path d="M11.5 5.5 V11.5 H17" fill="none" stroke="#444" stroke-width="1.4"/></svg>
<div class="a" style="left:323.9px;top:213px;width:14.8px;height:15px;background:#1a55bd;border-radius:2.5px"></div><svg style="left:323.9px;top:213px;" width="15" height="15" viewBox="0 0 15 15"><path d="M3.3 7.6 L6.3 10.6 L11.8 4.6" fill="none" stroke="#fff" stroke-width="2.2"/></svg>
<div class="t" style="left:344.5px;top:212.0px;font-size:16.2px;color:#484848;font-weight:normal;font-style:normal;letter-spacing:0.20px;">Disable imprinting</div>
<div class="a" style="left:323.9px;top:247.2px;width:14.8px;height:15px;border:1.2px solid #6a6a6a;border-radius:2.5px;background:#fff"></div>
<div class="t" style="left:344.5px;top:246.8px;font-size:16.2px;color:#484848;font-weight:normal;font-style:normal;letter-spacing:0.17px;">Show constraints</div>
<div class="a" style="left:323.9px;top:281.4px;width:14.8px;height:15px;background:#1a55bd;border-radius:2.5px"></div><svg style="left:323.9px;top:281.4px;" width="15" height="15" viewBox="0 0 15 15"><path d="M3.3 7.6 L6.3 10.6 L11.8 4.6" fill="none" stroke="#fff" stroke-width="2.2"/></svg>
<div class="t" style="left:344.5px;top:280.3px;font-size:16.2px;color:#484848;font-weight:normal;font-style:normal;letter-spacing:-0.03px;">Show expressions</div>
<div class="a" style="left:323.9px;top:315.4px;width:14.8px;height:15px;background:#1a55bd;border-radius:2.5px"></div><svg style="left:323.9px;top:315.4px;" width="15" height="15" viewBox="0 0 15 15"><path d="M3.3 7.6 L6.3 10.6 L11.8 4.6" fill="none" stroke="#fff" stroke-width="2.2"/></svg>
<div class="t" style="left:344.5px;top:314.3px;font-size:16.2px;color:#484848;font-weight:normal;font-style:normal;letter-spacing:-0.04px;">Show overdefined</div>
<div class="a" style="left:500.6px;top:343.5px;width:60px;height:26px;border:1px solid #a9a9a9;border-radius:3.5px;background:#fff"></div>
<div class="t" style="left:514.6px;top:349.1px;font-size:15px;color:#333;font-weight:normal;font-style:normal;letter-spacing:-0.02px;">Final</div>
<svg style="left:571.5px;top:353px;" width="16" height="16" viewBox="0 0 16 16"><circle cx="8" cy="8" r="7.6" fill="#a9a9a9"/><path d="M5.5 6.3 Q5.5 3.5 8 3.5 Q10.6 3.5 10.6 6 Q10.6 7.3 9 8.2 Q8 8.8 8 10" fill="none" stroke="#fff" stroke-width="1.8"/><rect x="7" y="11" width="2.1" height="2" fill="#fff"/></svg>
<div class="a" style="left:50px;top:1256px;width:2347px;height:38px;background:#d7d7d7;border-top:1px solid #c8c8c8;border-bottom-right-radius:9px;border-bottom:2px solid #a6a6a6"></div>
<div class="a" style="left:10px;top:1292.8px;width:40px;height:1.2px;background:#a6a6a6"></div>
<div class="a" style="left:50px;top:1257px;width:43px;height:35px;background:#d2d2d2"></div>
<svg style="left:60px;top:1265px;" width="22" height="20" viewBox="0 0 22 20"><path d="M11 1 V19 M1.5 10 H20.5" stroke="#555" stroke-width="3"/></svg>
<svg style="left:93px;top:1257px;" width="50" height="35" viewBox="0 0 50 35"><path d="M0 0 H42 L50 17.5 L42 35 H0 Z" fill="#e8e8e8"/></svg>
<svg style="left:103px;top:1260px;" width="24" height="24" viewBox="0 0 24 24"><path d="M1 12 L12 1.5 L17 6 V2.5 H20.5 V9.5 L23 12 V22.5 H15.5 V15.5 H8.5 V22.5 H1 Z" fill="#666"/></svg>
<svg style="left:135px;top:1257px;" width="173" height="35" viewBox="0 0 173 35"><path d="M0 0 H162 L171 17.5 L162 35 H0 L9 17.5 Z" fill="#fff"/></svg>
<div class="t" style="left:163.2px;top:1264.3px;font-size:17px;color:#555;font-weight:normal;font-style:normal;letter-spacing:0.10px;">Exercise 4 - Tel</div>
<div class="a" style="left:309px;top:1257px;width:250px;height:35px;background:#e8e8e8;border-radius:6px 6px 6px 6px"></div>
<svg style="left:323px;top:1264px;" width="20" height="20" viewBox="0 0 20 20"><circle cx="10" cy="10" r="9" fill="#6a9ad6"/><path d="M10 4 V13.5 M6 10 L10 14 L14 10" fill="none" stroke="#fff" stroke-width="2.4"/></svg>
<svg style="left:346px;top:1262px;" width="24" height="24" viewBox="0 0 24 24"><path d="M1.5 5 L4.5 1.5 H19 L22.5 5 V22.5 H4.5 L1.5 19.5 Z" fill="#fff" stroke="#444" stroke-width="1.1"/><path d="M4.5 4.5 L8 1.5 H19 V15 L15.5 18 H4.5 Z" fill="#888" stroke="#444" stroke-width="1"/><path d="M4.5 4.5 H15.5 V18 M15.5 4.5 L19 1.5 M4.5 4.5 L1.5 5" fill="none" stroke="#444" stroke-width="1"/></svg>
<div class="t" style="left:375.5px;top:1266.1px;font-size:17px;color:#6a6a6a;font-weight:normal;font-style:normal;letter-spacing:0.19px;">Exercise 4 Assembly</div>
<div class="a" style="left:561px;top:1257px;width:249px;height:34px;background:#fff;border-radius:6px 6px 3px 3px;border-bottom:2px solid #1d50b6"></div>
<svg style="left:575px;top:1261px;" width="24" height="26" viewBox="0 0 24 26"><path d="M1.5 7 L4 5 H9 V24 H1.5 Z" fill="#fff" stroke="#444" stroke-width="1.1"/><path d="M4 5 V24 M9 5 L7 7" fill="none" stroke="#444" stroke-width="1"/><path d="M11 3 L13.5 1 H20.5 L22.5 3 V24 H11 Z" fill="#fff" stroke="#444" stroke-width="1.1"/><path d="M13.5 1 V24 M11 3 H13.5" fill="none" stroke="#444" stroke-width="1"/></svg>
<div class="t" style="left:602.0px;top:1266.1px;font-size:17px;color:#333;font-weight:normal;font-style:normal;letter-spacing:0.10px;">Exercise 4 Part Studio</div>
<div class="a" style="left:2397px;top:0;width:1px;height:145px;background:#4f8a4f"></div>
<div class="a" style="left:2396.5px;top:145px;width:1.5px;height:1149px;background:#b4b4b4"></div>
</body></html>
